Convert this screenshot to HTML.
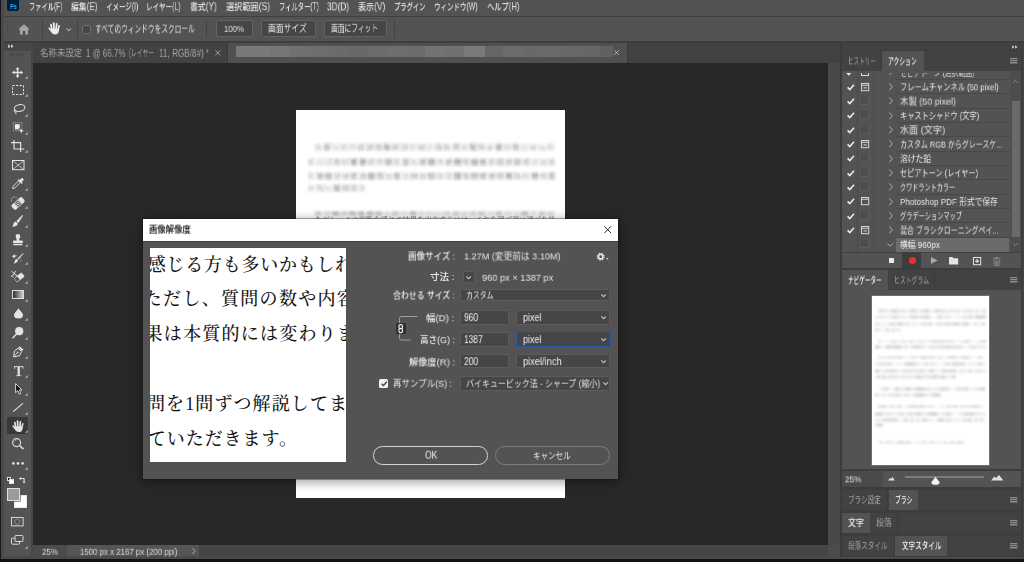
<!DOCTYPE html>
<html lang="ja"><head><meta charset="utf-8"><title>Photoshop - 画像解像度</title>
<style>
html,body{margin:0;padding:0}
body{width:1024px;height:562px;overflow:hidden;background:#282828;position:relative;font-family:"Liberation Sans","Noto Sans CJK JP",sans-serif;color:#dcdcdc;font-size:10px}
body div,body span.t,body svg{position:absolute;box-sizing:border-box}
section{position:absolute;left:0;top:0;width:0;height:0}
.t{white-space:nowrap;transform-origin:0 50%;display:block;will-change:transform}
svg{overflow:visible}
.t i{font-style:normal;font-size:1.05em}
.pv{position:absolute;white-space:nowrap;font-family:"Liberation Serif","Noto Serif CJK SC",serif;font-size:18px;line-height:26px;letter-spacing:1.3px;color:#141414;font-weight:500}
</style></head>
<body>
<section id="window">
<div style="left:0px;top:0px;width:1024px;height:559.3px;background:#4a4a4a;"></div>
<div style="left:0px;top:0px;width:1.1px;height:562px;background:#1a171d;"></div>
<div style="left:0px;top:559.3px;width:1024px;height:2.7px;background:#111111;"></div>
</section>
<section id="menubar">
<div style="left:4px;top:0px;width:1020px;height:15.5px;background:#535353;"></div>
<div style="left:4px;top:15.5px;width:1020px;height:1.5px;background:#3f3f3f;"></div>
<div style="left:7.2px;top:-2px;width:11.6px;height:12.6px;background:#001e36;border-radius:2.5px"></div>
<span class="t" style="left:10.0px;top:0px;font-size:8px;line-height:11px;color:#31a8ff;font-weight:700;transform:translate3d(0,0.96px,0) scaleX(0.7043);">Ps</span>
<span class="t" style="left:28.7px;top:0px;font-size:9.6px;line-height:13px;color:#e6e6e6;font-weight:500;transform:translate3d(0,0.1px,0) scaleX(0.6498);">ファイル<i>(F)</i></span>
<span class="t" style="left:70.9px;top:0px;font-size:9.6px;line-height:13px;color:#e6e6e6;font-weight:500;transform:translate3d(0,0.1px,0) scaleX(0.8153);">編集<i>(E)</i></span>
<span class="t" style="left:105.7px;top:0px;font-size:9.6px;line-height:13px;color:#e6e6e6;font-weight:500;transform:translate3d(0,0.1px,0) scaleX(0.6771);">イメージ<i>(I)</i></span>
<span class="t" style="left:146.4px;top:0px;font-size:9.6px;line-height:13px;color:#e6e6e6;font-weight:500;transform:translate3d(0,0.1px,0) scaleX(0.6862);">レイヤー<i>(L)</i></span>
<span class="t" style="left:190.2px;top:0px;font-size:9.6px;line-height:13px;color:#e6e6e6;font-weight:500;transform:translate3d(0,0.1px,0) scaleX(0.8215);">書式<i>(Y)</i></span>
<span class="t" style="left:225.7px;top:0px;font-size:9.6px;line-height:13px;color:#e6e6e6;font-weight:500;transform:translate3d(0,0.1px,0) scaleX(0.8492);">選択範囲<i>(S)</i></span>
<span class="t" style="left:278.7px;top:0px;font-size:9.6px;line-height:13px;color:#e6e6e6;font-weight:500;transform:translate3d(0,0.1px,0) scaleX(0.6562);">フィルター<i>(T)</i></span>
<span class="t" style="left:327px;top:-1px;font-size:10.5px;line-height:15px;color:#f0f0f0;font-weight:500;transform:translate3d(0,0.33px,0) scaleX(0.7857);">3D(D)</span>
<span class="t" style="left:358.2px;top:0px;font-size:9.6px;line-height:13px;color:#e6e6e6;font-weight:500;transform:translate3d(0,0.1px,0) scaleX(0.8368);">表示<i>(V)</i></span>
<span class="t" style="left:394.4px;top:0px;font-size:9.6px;line-height:13px;color:#e6e6e6;font-weight:500;transform:translate3d(0,0.1px,0) scaleX(0.6588);">プラグイン</span>
<span class="t" style="left:434.4px;top:0px;font-size:9.6px;line-height:13px;color:#e6e6e6;font-weight:500;transform:translate3d(0,0.1px,0) scaleX(0.6791);">ウィンドウ<i>(W)</i></span>
<span class="t" style="left:486.7px;top:0px;font-size:9.6px;line-height:13px;color:#e6e6e6;font-weight:500;transform:translate3d(0,0.1px,0) scaleX(0.7550);">ヘルプ<i>(H)</i></span>
</section>
<section id="optionsbar">
<div style="left:4px;top:17px;width:1020px;height:24px;background:#535353;"></div>
<div style="left:4px;top:41px;width:1020px;height:1.5px;background:#3d3d3d;"></div>
<div style="left:7.3px;top:22px;width:1px;height:14px;background:repeating-linear-gradient(180deg,#474747 0 1px,#535353 1px 1.75px)"></div>
<svg style="left:17.9px;top:23.5px;" width="11.6" height="11" viewBox="0 0 11.6 11"><path d="M6 0.3 L0.2 5.6 H1.9 V10.6 H4.7 V7 H7.3 V10.6 H10.1 V5.6 H11.8 Z" fill="#a3a3a3"/></svg>
<div style="left:41.5px;top:20px;width:1.2px;height:17.5px;background:#434343;"></div>
<svg style="left:47.8px;top:22.3px;" width="12.4" height="12.4" viewBox="-0.2 0 12.6 12.6"><g fill="#ececec"><rect x="2.9" y="1.7" width="1.8" height="7" rx="0.9" transform="rotate(-9 3.8 8.6)"/><rect x="5" y="0.2" width="1.8" height="8.4" rx="0.9" transform="rotate(-2 5.9 8.6)"/><rect x="7.1" y="0.9" width="1.8" height="7.7" rx="0.9" transform="rotate(5 8 8.6)"/><rect x="9" y="2.9" width="1.6" height="6" rx="0.8" transform="rotate(15 9.8 8.9)"/><path d="M2.9 6.9 H10.9 V8.8 C10.9 11.2 9.3 12.6 7 12.6 C5.1 12.6 4.1 11.9 3.1 10.5 L0.4 6.9 C-0.2 6 0.9 5.1 1.6 5.9 L2.9 7.4 Z"/></g></svg>
<svg style="left:65.8px;top:28.1px;" width="5.4" height="3.2" viewBox="0 0 5.4 3.2"><path d="M0.3 0.3 L2.7 2.7 L5.1 0.3" fill="none" stroke="#a8a8a8" stroke-width="1.1"/></svg>
<div style="left:76.6px;top:20px;width:1.2px;height:17.5px;background:#434343;"></div>
<div style="left:82.2px;top:25.3px;width:8.6px;height:8.4px;background:#474747;border:1px solid #727272;border-radius:2.5px"></div>
<span class="t" style="left:95.3px;top:22px;font-size:10px;line-height:14px;color:#e0e0e0;transform:translate3d(0,0.6px,0) scaleX(0.6695);">すべてのウィンドウをスクロール</span>
<div style="left:206px;top:20px;width:1.2px;height:17.5px;background:#434343;"></div>
<div style="left:215.5px;top:20px;width:37.5px;height:17.2px;background:#464646;border:1px solid #626262;border-radius:2px"></div>
<span class="t" style="left:224px;top:22px;font-size:9px;line-height:13px;color:#e0e0e0;transform:translate3d(0,0.93px,0) scaleX(0.8684);">100%</span>
<div style="left:260.5px;top:20px;width:55.0px;height:17.2px;background:#464646;border:1px solid #626262;border-radius:2px"></div>
<span class="t" style="left:268.2px;top:21px;font-size:10px;line-height:14px;color:#e0e0e0;transform:translate3d(0,0.8px,0) scaleX(0.7806);">画面サイズ</span>
<div style="left:323.5px;top:20px;width:63.5px;height:17.2px;background:#464646;border:1px solid #626262;border-radius:2px"></div>
<span class="t" style="left:331.4px;top:21px;font-size:10px;line-height:14px;color:#e0e0e0;transform:translate3d(0,0.8px,0) scaleX(0.6747);">画面にフィット</span>
<div style="left:393.6px;top:20px;width:1.2px;height:17.5px;background:#434343;"></div>
</section>
<section id="doctabs">
<div style="left:33px;top:42.5px;width:807px;height:20.5px;background:#424242;"></div>
<div style="left:226.6px;top:42.5px;width:1.0px;height:20.5px;background:#383838;"></div>
<div style="left:227.6px;top:42.5px;width:399.4px;height:20.5px;background:#505050;"></div>
<div style="left:627px;top:42.5px;width:1px;height:20.5px;background:#3a3a3a;"></div>
<span class="t" style="left:40.3px;top:46px;font-size:9.6px;line-height:13px;color:#a6a6a6;transform:translate3d(0,0.1px,0) scaleX(0.8797);">名称未設定</span>
<span class="t" style="left:86.2px;top:45px;font-size:10.6px;line-height:15px;color:#a6a6a6;transform:translate3d(0,0.84px,0) scaleX(0.7494);">1 @ 66.7%</span>
<span class="t" style="left:128.6px;top:46px;font-size:9.6px;line-height:13px;color:#a6a6a6;transform:translate3d(0,0.1px,0) scaleX(0.6031);"><i>(</i>レイヤー</span>
<span class="t" style="left:158.6px;top:45px;font-size:10.6px;line-height:15px;color:#a6a6a6;transform:translate3d(0,0.84px,0) scaleX(0.7710);">11, RGB/8#)</span>
<span class="t" style="left:206px;top:45px;font-size:10.6px;line-height:15px;color:#a6a6a6;transform:translate3d(0,0.84px,0) scaleX(0.6303);">*</span>
<svg style="left:214.6px;top:50px;" width="5.6" height="5.6" viewBox="0 0 5.6 5.6"><path d="M0.3 0.3 L5.3 5.3 M5.3 0.3 L0.3 5.3" stroke="#a8a8a8" stroke-width="0.9" fill="none"/></svg>
<div style="left:236px;top:46px;width:377px;height:10.5px;background:linear-gradient(90deg,rgb(121,121,121) 0.0px 34.5px,rgb(118,118,118) 34.5px 54.1px,rgb(112,112,112) 54.1px 73.8px,rgb(110,110,110) 73.8px 93.1px,rgb(107,107,107) 93.1px 112.8px,rgb(105,105,105) 112.8px 132.1px,rgb(108,108,108) 132.1px 151.8px,rgb(111,111,111) 151.8px 171.0px,rgb(108,108,108) 171.0px 189.5px,rgb(115,115,115) 189.5px 209.2px,rgb(113,113,113) 209.2px 228.5px,rgb(122,122,122) 228.5px 249.0px,rgb(102,102,102) 249.0px 267.4px,rgb(108,108,108) 267.4px 287.1px,rgb(105,105,105) 287.1px 306.4px,rgb(106,106,106) 306.4px 326.1px,rgb(104,104,104) 326.1px 345.4px,rgb(103,103,103) 345.4px 363.8px,rgb(97,97,97) 363.8px 377.4px)"></div>
<svg style="left:614px;top:50px;" width="5.2" height="5.2" viewBox="0 0 5.2 5.2"><path d="M0.3 0.3 L4.9 4.9 M4.9 0.3 L0.3 4.9" stroke="#bdbdbd" stroke-width="0.9" fill="none"/></svg>
</section>
<section id="canvas">
<div style="left:33px;top:63px;width:795px;height:481.8px;background:#282828;"></div>
<div style="left:828px;top:63px;width:12px;height:481.8px;background:#494949;"></div>
<div style="left:33px;top:544.8px;width:795px;height:11.2px;background:#464646;"></div>
<div style="left:828px;top:544.8px;width:12px;height:11.2px;background:#4c4c4c;"></div>
<div style="left:840px;top:42.5px;width:2px;height:514.5px;background:#3b3b3b;"></div>
<div style="left:31px;top:42.5px;width:2px;height:513.5px;background:#474747;"></div>
<div style="left:33px;top:544.8px;width:33.8px;height:11.2px;background:#4b4b4b;"></div>
<div style="left:66.8px;top:544.8px;width:132.7px;height:11.2px;background:#555555;"></div>
<span class="t" style="left:42px;top:544px;font-size:9.5px;line-height:13px;color:#dedede;transform:translate3d(0,0.76px,0) scaleX(0.8414);">25%</span>
<span class="t" style="left:80px;top:544px;font-size:9.5px;line-height:13px;color:#d8d8d8;transform:translate3d(0,0.76px,0) scaleX(0.8270);">1500 px x 2167 px (200 ppi)</span>
<svg style="left:191.8px;top:547.6px;" width="3.6" height="6.4" viewBox="0 0 3.6 6.4"><path d="M0.4 0.4 L3.1 3.2 L0.4 6" fill="none" stroke="#b8b8b8" stroke-width="0.9"/></svg>
<div style="left:296.0px;top:109.5px;width:269.1px;height:388.6px;background:#ffffff;"></div>
<div style="left:315px;top:142.9px;width:240.4px;height:8px;filter:blur(0.9px);opacity:1.0">
<div style="left:0;top:0.0px;width:100%;height:2.72px;background:linear-gradient(90deg,#ebebeb 0.0px 4.3px,#f0f0f0 4.3px 6.4px,#fafafa 6.4px 8.6px,#dcdcdc 8.6px 10.8px,#d2d2d2 10.8px 12.9px,#dcdcdc 12.9px 15.0px,#f0f0f0 15.0px 17.2px,#e6e6e6 17.2px 19.3px,#f5f5f5 19.3px 21.5px,#f0f0f0 21.5px 23.6px,#f5f5f5 23.6px 25.8px,#e6e6e6 25.8px 27.9px,#f0f0f0 27.9px 30.1px,#e1e1e1 30.1px 32.2px,#f5f5f5 32.2px 34.4px,#ebebeb 34.4px 40.9px,#f5f5f5 40.9px 43.0px,#e1e1e1 43.0px 45.1px,#e6e6e6 45.1px 47.3px,#e1e1e1 47.3px 49.4px,#f0f0f0 49.4px 51.6px,#dcdcdc 51.6px 53.8px,#f0f0f0 53.8px 55.9px,#d2d2d2 55.9px 58.0px,#f0f0f0 58.0px 60.2px,#ebebeb 60.2px 62.3px,#d7d7d7 62.3px 64.5px,#e1e1e1 64.5px 66.6px,#f5f5f5 66.6px 68.8px,#cdcdcd 68.8px 71.0px,#dcdcdc 71.0px 73.1px,#d7d7d7 73.1px 75.2px,#f5f5f5 75.2px 77.4px,#e6e6e6 77.4px 83.8px,#f0f0f0 83.8px 86.0px,#ebebeb 86.0px 88.1px,#e1e1e1 88.1px 90.3px,#e6e6e6 90.3px 92.5px,#f0f0f0 92.5px 94.6px,#e6e6e6 94.6px 96.8px,#ebebeb 96.8px 101.0px,#f5f5f5 101.0px 103.2px,#e6e6e6 103.2px 105.3px,#f0f0f0 105.3px 107.5px,#dcdcdc 107.5px 109.6px,#f0f0f0 109.6px 111.8px,#f5f5f5 111.8px 113.9px,#e6e6e6 113.9px 116.1px,#fafafa 116.1px 118.2px,#f0f0f0 118.2px 120.4px,#e1e1e1 120.4px 122.5px,#dcdcdc 122.5px 124.7px,#ebebeb 124.7px 126.8px,#f5f5f5 126.8px 129.0px,#e1e1e1 129.0px 131.2px,#ebebeb 131.2px 135.4px,#fafafa 135.4px 137.6px,#d7d7d7 137.6px 139.8px,#dcdcdc 139.8px 141.9px,#cdcdcd 141.9px 144.0px,#f0f0f0 144.0px 146.2px,#f5f5f5 146.2px 148.3px,#ebebeb 148.3px 150.5px,#f0f0f0 150.5px 154.8px,#cdcdcd 154.8px 156.9px,#dcdcdc 156.9px 159.1px,#d7d7d7 159.1px 161.2px,#f0f0f0 161.2px 163.4px,#e1e1e1 163.4px 165.5px,#e6e6e6 165.5px 169.8px,#f0f0f0 169.8px 172.0px,#f5f5f5 172.0px 174.2px,#ebebeb 174.2px 176.3px,#f0f0f0 176.3px 180.6px,#d7d7d7 180.6px 182.8px,#d2d2d2 182.8px 184.9px,#d7d7d7 184.9px 187.0px,#f0f0f0 187.0px 189.2px,#ebebeb 189.2px 195.7px,#f0f0f0 195.7px 197.8px,#d2d2d2 197.8px 199.9px,#d7d7d7 199.9px 202.1px,#e6e6e6 202.1px 204.2px,#f5f5f5 204.2px 206.4px,#ebebeb 206.4px 208.5px,#f5f5f5 208.5px 210.7px,#f0f0f0 210.7px 212.8px,#f5f5f5 212.8px 215.0px,#f0f0f0 215.0px 217.1px,#f5f5f5 217.1px 219.3px,#e6e6e6 219.3px 221.4px,#f5f5f5 221.4px 223.6px,#f0f0f0 223.6px 225.8px,#f5f5f5 225.8px 227.9px,#fafafa 227.9px 230.0px,#f0f0f0 230.0px 234.3px,#e1e1e1 234.3px 236.5px,#f5f5f5 236.5px 240.8px)"></div>
<div style="left:0;top:2.67px;width:100%;height:2.72px;background:linear-gradient(90deg,#d7d7d7 0.0px 2.1px,#d2d2d2 2.1px 4.3px,#d7d7d7 4.3px 6.4px,#f0f0f0 6.4px 8.6px,#b9b9b9 8.6px 10.8px,#bebebe 10.8px 15.0px,#f0f0f0 15.0px 17.2px,#e1e1e1 17.2px 23.6px,#f5f5f5 23.6px 25.8px,#d2d2d2 25.8px 27.9px,#d7d7d7 27.9px 30.1px,#dcdcdc 30.1px 32.2px,#f5f5f5 32.2px 34.4px,#e6e6e6 34.4px 36.5px,#d7d7d7 36.5px 38.7px,#e1e1e1 38.7px 40.9px,#f0f0f0 40.9px 43.0px,#cdcdcd 43.0px 45.1px,#d2d2d2 45.1px 47.3px,#c3c3c3 47.3px 49.4px,#f5f5f5 49.4px 51.6px,#cdcdcd 51.6px 55.9px,#bebebe 55.9px 58.0px,#f0f0f0 58.0px 60.2px,#c8c8c8 60.2px 62.3px,#d2d2d2 62.3px 64.5px,#c8c8c8 64.5px 66.6px,#f5f5f5 66.6px 68.8px,#afafaf 68.8px 73.1px,#b4b4b4 73.1px 75.2px,#f5f5f5 75.2px 77.4px,#c3c3c3 77.4px 79.5px,#c8c8c8 79.5px 83.8px,#f5f5f5 83.8px 86.0px,#dcdcdc 86.0px 90.3px,#cdcdcd 90.3px 92.5px,#f5f5f5 92.5px 94.6px,#d7d7d7 94.6px 96.8px,#e1e1e1 96.8px 98.9px,#d7d7d7 98.9px 101.0px,#f5f5f5 101.0px 103.2px,#cdcdcd 103.2px 107.5px,#c8c8c8 107.5px 109.6px,#f0f0f0 109.6px 111.8px,#e6e6e6 111.8px 113.9px,#e1e1e1 113.9px 116.1px,#e6e6e6 116.1px 118.2px,#f5f5f5 118.2px 120.4px,#d7d7d7 120.4px 122.5px,#c8c8c8 122.5px 126.8px,#f0f0f0 126.8px 129.0px,#c8c8c8 129.0px 133.3px,#d2d2d2 133.3px 135.4px,#fafafa 135.4px 137.6px,#c3c3c3 137.6px 141.9px,#c8c8c8 141.9px 144.0px,#f5f5f5 144.0px 146.2px,#dcdcdc 146.2px 148.3px,#d7d7d7 148.3px 150.5px,#dcdcdc 150.5px 152.7px,#f5f5f5 152.7px 154.8px,#afafaf 154.8px 156.9px,#b9b9b9 156.9px 159.1px,#bebebe 159.1px 161.2px,#f5f5f5 161.2px 163.4px,#cdcdcd 163.4px 165.5px,#c8c8c8 165.5px 167.7px,#d2d2d2 167.7px 169.8px,#f5f5f5 169.8px 172.0px,#d7d7d7 172.0px 174.2px,#c8c8c8 174.2px 176.3px,#d7d7d7 176.3px 178.4px,#f0f0f0 178.4px 180.6px,#b4b4b4 180.6px 182.8px,#aaaaaa 182.8px 184.9px,#b4b4b4 184.9px 187.0px,#fafafa 187.0px 189.2px,#cdcdcd 189.2px 191.3px,#e1e1e1 191.3px 193.5px,#dcdcdc 193.5px 195.7px,#f5f5f5 195.7px 197.8px,#b9b9b9 197.8px 199.9px,#bebebe 199.9px 204.2px,#f5f5f5 204.2px 206.4px,#ebebeb 206.4px 208.5px,#e1e1e1 208.5px 210.7px,#e6e6e6 210.7px 212.8px,#f0f0f0 212.8px 215.0px,#d7d7d7 215.0px 217.1px,#d2d2d2 217.1px 219.3px,#d7d7d7 219.3px 221.4px,#f5f5f5 221.4px 223.6px,#dcdcdc 223.6px 225.8px,#e1e1e1 225.8px 230.0px,#fafafa 230.0px 232.2px,#d7d7d7 232.2px 234.3px,#dcdcdc 234.3px 236.5px,#e1e1e1 236.5px 238.6px,#f5f5f5 238.6px 240.8px)"></div>
<div style="left:0;top:5.33px;width:100%;height:2.72px;background:linear-gradient(90deg,#e6e6e6 0.0px 2.1px,#ebebeb 2.1px 4.3px,#e6e6e6 4.3px 6.4px,#f5f5f5 6.4px 8.6px,#d7d7d7 8.6px 10.8px,#d2d2d2 10.8px 12.9px,#d7d7d7 12.9px 15.0px,#fafafa 15.0px 17.2px,#ebebeb 17.2px 23.6px,#f5f5f5 23.6px 25.8px,#e1e1e1 25.8px 27.9px,#ebebeb 27.9px 30.1px,#e6e6e6 30.1px 32.2px,#f0f0f0 32.2px 34.4px,#ebebeb 34.4px 36.5px,#f5f5f5 36.5px 38.7px,#e6e6e6 38.7px 40.9px,#f5f5f5 40.9px 43.0px,#d7d7d7 43.0px 45.1px,#dcdcdc 45.1px 49.4px,#f0f0f0 49.4px 51.6px,#d2d2d2 51.6px 53.8px,#e1e1e1 53.8px 55.9px,#e6e6e6 55.9px 58.0px,#f0f0f0 58.0px 60.2px,#e6e6e6 60.2px 62.3px,#dcdcdc 62.3px 66.6px,#f5f5f5 66.6px 68.8px,#d2d2d2 68.8px 71.0px,#cdcdcd 71.0px 75.2px,#f0f0f0 75.2px 77.4px,#dcdcdc 77.4px 79.5px,#e1e1e1 79.5px 81.7px,#e6e6e6 81.7px 83.8px,#f0f0f0 83.8px 86.0px,#ebebeb 86.0px 88.1px,#dcdcdc 88.1px 90.3px,#e1e1e1 90.3px 92.5px,#fafafa 92.5px 94.6px,#e1e1e1 94.6px 96.8px,#ebebeb 96.8px 98.9px,#f0f0f0 98.9px 101.0px,#f5f5f5 101.0px 103.2px,#e1e1e1 103.2px 105.3px,#dcdcdc 105.3px 107.5px,#e1e1e1 107.5px 109.6px,#f0f0f0 109.6px 111.8px,#ebebeb 111.8px 116.1px,#f0f0f0 116.1px 118.2px,#f5f5f5 118.2px 120.4px,#e1e1e1 120.4px 122.5px,#dcdcdc 122.5px 124.7px,#d2d2d2 124.7px 126.8px,#fafafa 126.8px 129.0px,#d7d7d7 129.0px 131.2px,#e6e6e6 131.2px 133.3px,#e1e1e1 133.3px 135.4px,#f0f0f0 135.4px 137.6px,#e1e1e1 137.6px 139.8px,#e6e6e6 139.8px 141.9px,#d7d7d7 141.9px 144.0px,#f5f5f5 144.0px 146.2px,#ebebeb 146.2px 148.3px,#e6e6e6 148.3px 150.5px,#ebebeb 150.5px 152.7px,#fafafa 152.7px 154.8px,#dcdcdc 154.8px 156.9px,#c8c8c8 156.9px 159.1px,#cdcdcd 159.1px 161.2px,#f0f0f0 161.2px 163.4px,#e6e6e6 163.4px 167.7px,#dcdcdc 167.7px 169.8px,#f5f5f5 169.8px 172.0px,#e1e1e1 172.0px 174.2px,#dcdcdc 174.2px 176.3px,#e6e6e6 176.3px 178.4px,#fafafa 178.4px 180.6px,#c8c8c8 180.6px 182.8px,#cdcdcd 182.8px 187.0px,#f5f5f5 187.0px 189.2px,#e6e6e6 189.2px 191.3px,#ebebeb 191.3px 193.5px,#e6e6e6 193.5px 195.7px,#f5f5f5 195.7px 197.8px,#e1e1e1 197.8px 199.9px,#d7d7d7 199.9px 204.2px,#f5f5f5 204.2px 206.4px,#e6e6e6 206.4px 208.5px,#ebebeb 208.5px 212.8px,#fafafa 212.8px 215.0px,#e1e1e1 215.0px 217.1px,#e6e6e6 217.1px 219.3px,#dcdcdc 219.3px 221.4px,#f5f5f5 221.4px 223.6px,#e1e1e1 223.6px 225.8px,#f0f0f0 225.8px 227.9px,#d7d7d7 227.9px 230.0px,#f0f0f0 230.0px 232.2px,#ebebeb 232.2px 238.6px,#f0f0f0 238.6px 240.8px)"></div>
</div>
<div style="left:308.4px;top:157.5px;width:246.6px;height:8px;filter:blur(0.9px);opacity:1.0">
<div style="left:0;top:0.0px;width:100%;height:2.72px;background:linear-gradient(90deg,#fafafa 0.0px 2.1px,#e6e6e6 2.1px 4.3px,#e1e1e1 4.3px 6.4px,#f5f5f5 6.4px 8.6px,#f0f0f0 8.6px 15.0px,#f5f5f5 15.0px 17.2px,#ebebeb 17.2px 19.3px,#f5f5f5 19.3px 21.5px,#dcdcdc 21.5px 23.6px,#f0f0f0 23.6px 25.8px,#e6e6e6 25.8px 27.9px,#d7d7d7 27.9px 30.1px,#e6e6e6 30.1px 32.2px,#f5f5f5 32.2px 34.4px,#e1e1e1 34.4px 36.5px,#f5f5f5 36.5px 38.7px,#dcdcdc 38.7px 40.9px,#f0f0f0 40.9px 43.0px,#d7d7d7 43.0px 45.1px,#d2d2d2 45.1px 47.3px,#cdcdcd 47.3px 49.4px,#f5f5f5 49.4px 51.6px,#c8c8c8 51.6px 53.8px,#d2d2d2 53.8px 58.0px,#f5f5f5 58.0px 60.2px,#e1e1e1 60.2px 62.3px,#e6e6e6 62.3px 64.5px,#e1e1e1 64.5px 66.6px,#f5f5f5 66.6px 68.8px,#f0f0f0 68.8px 71.0px,#e1e1e1 71.0px 73.1px,#ebebeb 73.1px 75.2px,#f0f0f0 75.2px 77.4px,#d7d7d7 77.4px 81.7px,#dcdcdc 81.7px 83.8px,#f0f0f0 83.8px 86.0px,#e1e1e1 86.0px 88.1px,#e6e6e6 88.1px 92.5px,#f5f5f5 92.5px 94.6px,#d7d7d7 94.6px 98.9px,#e1e1e1 98.9px 101.0px,#f0f0f0 101.0px 103.2px,#ebebeb 103.2px 105.3px,#f0f0f0 105.3px 107.5px,#f5f5f5 107.5px 111.8px,#e1e1e1 111.8px 116.1px,#dcdcdc 116.1px 118.2px,#ebebeb 118.2px 120.4px,#d2d2d2 120.4px 126.8px,#f5f5f5 126.8px 129.0px,#ebebeb 129.0px 131.2px,#f0f0f0 131.2px 133.3px,#e6e6e6 133.3px 135.4px,#f5f5f5 135.4px 137.6px,#e1e1e1 137.6px 144.0px,#fafafa 144.0px 146.2px,#d7d7d7 146.2px 148.3px,#d2d2d2 148.3px 150.5px,#d7d7d7 150.5px 152.7px,#f0f0f0 152.7px 154.8px,#e1e1e1 154.8px 159.1px,#d7d7d7 159.1px 161.2px,#f5f5f5 161.2px 163.4px,#e1e1e1 163.4px 167.7px,#d2d2d2 167.7px 169.8px,#f0f0f0 169.8px 172.0px,#dcdcdc 172.0px 174.2px,#e1e1e1 174.2px 176.3px,#d7d7d7 176.3px 178.4px,#f5f5f5 178.4px 180.6px,#e6e6e6 180.6px 184.9px,#ebebeb 184.9px 187.0px,#f0f0f0 187.0px 189.2px,#dcdcdc 189.2px 193.5px,#d7d7d7 193.5px 195.7px,#fafafa 195.7px 197.8px,#e1e1e1 197.8px 199.9px,#e6e6e6 199.9px 202.1px,#e1e1e1 202.1px 204.2px,#f0f0f0 204.2px 206.4px,#d7d7d7 206.4px 208.5px,#e6e6e6 208.5px 210.7px,#d7d7d7 210.7px 212.8px,#fafafa 212.8px 215.0px,#e6e6e6 215.0px 217.1px,#e1e1e1 217.1px 219.3px,#d7d7d7 219.3px 221.4px,#f0f0f0 221.4px 227.9px,#ebebeb 227.9px 230.0px,#fafafa 230.0px 232.2px,#ebebeb 232.2px 234.3px,#f0f0f0 234.3px 240.8px,#ebebeb 240.8px 242.9px,#e6e6e6 242.9px 247.2px)"></div>
<div style="left:0;top:2.67px;width:100%;height:2.72px;background:linear-gradient(90deg,#d7d7d7 0.0px 2.1px,#dcdcdc 2.1px 4.3px,#e6e6e6 4.3px 6.4px,#fafafa 6.4px 8.6px,#e1e1e1 8.6px 10.8px,#e6e6e6 10.8px 12.9px,#e1e1e1 12.9px 15.0px,#f5f5f5 15.0px 17.2px,#e1e1e1 17.2px 19.3px,#ebebeb 19.3px 21.5px,#e1e1e1 21.5px 23.6px,#f5f5f5 23.6px 25.8px,#d2d2d2 25.8px 27.9px,#cdcdcd 27.9px 32.2px,#f0f0f0 32.2px 34.4px,#d2d2d2 34.4px 36.5px,#dcdcdc 36.5px 38.7px,#e6e6e6 38.7px 40.9px,#f5f5f5 40.9px 43.0px,#aaaaaa 43.0px 45.1px,#afafaf 45.1px 47.3px,#b9b9b9 47.3px 49.4px,#f5f5f5 49.4px 51.6px,#afafaf 51.6px 53.8px,#b4b4b4 53.8px 58.0px,#f5f5f5 58.0px 60.2px,#cdcdcd 60.2px 62.3px,#dcdcdc 62.3px 64.5px,#d7d7d7 64.5px 66.6px,#f5f5f5 66.6px 68.8px,#cdcdcd 68.8px 71.0px,#d7d7d7 71.0px 75.2px,#f0f0f0 75.2px 77.4px,#c3c3c3 77.4px 79.5px,#bebebe 79.5px 83.8px,#f5f5f5 83.8px 86.0px,#d2d2d2 86.0px 88.1px,#dcdcdc 88.1px 92.5px,#fafafa 92.5px 94.6px,#c3c3c3 94.6px 96.8px,#c8c8c8 96.8px 101.0px,#f5f5f5 101.0px 103.2px,#dcdcdc 103.2px 105.3px,#d7d7d7 105.3px 107.5px,#ebebeb 107.5px 109.6px,#f5f5f5 109.6px 111.8px,#bebebe 111.8px 118.2px,#f5f5f5 118.2px 120.4px,#b9b9b9 120.4px 122.5px,#b4b4b4 122.5px 126.8px,#f0f0f0 126.8px 129.0px,#dcdcdc 129.0px 131.2px,#d7d7d7 131.2px 135.4px,#f5f5f5 135.4px 137.6px,#c3c3c3 137.6px 139.8px,#cdcdcd 139.8px 141.9px,#c3c3c3 141.9px 144.0px,#f5f5f5 144.0px 146.2px,#afafaf 146.2px 148.3px,#b4b4b4 148.3px 150.5px,#afafaf 150.5px 152.7px,#f0f0f0 152.7px 154.8px,#c3c3c3 154.8px 156.9px,#d2d2d2 156.9px 161.2px,#f5f5f5 161.2px 163.4px,#b9b9b9 163.4px 169.8px,#f5f5f5 169.8px 172.0px,#b4b4b4 172.0px 174.2px,#bebebe 174.2px 176.3px,#b9b9b9 176.3px 178.4px,#f5f5f5 178.4px 180.6px,#cdcdcd 180.6px 182.8px,#d7d7d7 182.8px 187.0px,#f5f5f5 187.0px 189.2px,#c8c8c8 189.2px 191.3px,#cdcdcd 191.3px 193.5px,#d2d2d2 193.5px 195.7px,#f5f5f5 195.7px 197.8px,#c8c8c8 197.8px 199.9px,#cdcdcd 199.9px 202.1px,#c8c8c8 202.1px 204.2px,#f5f5f5 204.2px 206.4px,#cdcdcd 206.4px 208.5px,#c3c3c3 208.5px 210.7px,#cdcdcd 210.7px 212.8px,#f5f5f5 212.8px 215.0px,#d2d2d2 215.0px 217.1px,#cdcdcd 217.1px 219.3px,#d2d2d2 219.3px 221.4px,#f0f0f0 221.4px 223.6px,#e6e6e6 223.6px 225.8px,#dcdcdc 225.8px 227.9px,#e1e1e1 227.9px 230.0px,#f5f5f5 230.0px 232.2px,#e1e1e1 232.2px 234.3px,#d7d7d7 234.3px 236.5px,#dcdcdc 236.5px 238.6px,#f0f0f0 238.6px 240.8px,#d2d2d2 240.8px 242.9px,#d7d7d7 242.9px 245.1px,#d2d2d2 245.1px 247.2px)"></div>
<div style="left:0;top:5.33px;width:100%;height:2.72px;background:linear-gradient(90deg,#f0f0f0 0.0px 2.1px,#e1e1e1 2.1px 4.3px,#e6e6e6 4.3px 6.4px,#f5f5f5 6.4px 8.6px,#e6e6e6 8.6px 10.8px,#f5f5f5 10.8px 12.9px,#e1e1e1 12.9px 15.0px,#f5f5f5 15.0px 17.2px,#f0f0f0 17.2px 19.3px,#e6e6e6 19.3px 21.5px,#ebebeb 21.5px 23.6px,#f0f0f0 23.6px 25.8px,#e6e6e6 25.8px 27.9px,#dcdcdc 27.9px 30.1px,#e1e1e1 30.1px 32.2px,#fafafa 32.2px 34.4px,#e1e1e1 34.4px 36.5px,#ebebeb 36.5px 38.7px,#e6e6e6 38.7px 40.9px,#f5f5f5 40.9px 43.0px,#cdcdcd 43.0px 45.1px,#c8c8c8 45.1px 47.3px,#d2d2d2 47.3px 49.4px,#f5f5f5 49.4px 51.6px,#c8c8c8 51.6px 53.8px,#d2d2d2 53.8px 58.0px,#fafafa 58.0px 60.2px,#e1e1e1 60.2px 62.3px,#dcdcdc 62.3px 64.5px,#ebebeb 64.5px 66.6px,#f5f5f5 66.6px 68.8px,#ebebeb 68.8px 71.0px,#e6e6e6 71.0px 73.1px,#f0f0f0 73.1px 77.4px,#dcdcdc 77.4px 79.5px,#c8c8c8 79.5px 81.7px,#dcdcdc 81.7px 83.8px,#f0f0f0 83.8px 86.0px,#e6e6e6 86.0px 88.1px,#d7d7d7 88.1px 90.3px,#ebebeb 90.3px 92.5px,#f0f0f0 92.5px 94.6px,#cdcdcd 94.6px 96.8px,#d7d7d7 96.8px 101.0px,#f5f5f5 101.0px 103.2px,#e6e6e6 103.2px 109.6px,#f5f5f5 109.6px 111.8px,#d7d7d7 111.8px 113.9px,#dcdcdc 113.9px 116.1px,#d2d2d2 116.1px 118.2px,#fafafa 118.2px 120.4px,#cdcdcd 120.4px 126.8px,#f5f5f5 126.8px 129.0px,#ebebeb 129.0px 131.2px,#e6e6e6 131.2px 133.3px,#ebebeb 133.3px 135.4px,#f5f5f5 135.4px 137.6px,#d7d7d7 137.6px 141.9px,#e6e6e6 141.9px 144.0px,#f5f5f5 144.0px 146.2px,#d7d7d7 146.2px 148.3px,#d2d2d2 148.3px 150.5px,#cdcdcd 150.5px 152.7px,#f5f5f5 152.7px 154.8px,#ebebeb 154.8px 156.9px,#e1e1e1 156.9px 159.1px,#d7d7d7 159.1px 161.2px,#f5f5f5 161.2px 163.4px,#d2d2d2 163.4px 165.5px,#c8c8c8 165.5px 169.8px,#f0f0f0 169.8px 172.0px,#d2d2d2 172.0px 174.2px,#dcdcdc 174.2px 176.3px,#d2d2d2 176.3px 178.4px,#f5f5f5 178.4px 180.6px,#dcdcdc 180.6px 182.8px,#ebebeb 182.8px 187.0px,#f5f5f5 187.0px 189.2px,#d7d7d7 189.2px 191.3px,#dcdcdc 191.3px 195.7px,#f5f5f5 195.7px 197.8px,#d2d2d2 197.8px 199.9px,#e1e1e1 199.9px 204.2px,#f5f5f5 204.2px 206.4px,#d2d2d2 206.4px 208.5px,#d7d7d7 208.5px 210.7px,#dcdcdc 210.7px 212.8px,#f5f5f5 212.8px 215.0px,#ebebeb 215.0px 217.1px,#dcdcdc 217.1px 221.4px,#f0f0f0 221.4px 223.6px,#e1e1e1 223.6px 225.8px,#f0f0f0 225.8px 227.9px,#e6e6e6 227.9px 230.0px,#fafafa 230.0px 232.2px,#e6e6e6 232.2px 234.3px,#e1e1e1 234.3px 236.5px,#e6e6e6 236.5px 238.6px,#f5f5f5 238.6px 240.8px,#dcdcdc 240.8px 242.9px,#e1e1e1 242.9px 245.1px,#e6e6e6 245.1px 247.2px)"></div>
</div>
<div style="left:308.4px;top:171.6px;width:246.6px;height:8px;filter:blur(0.9px);opacity:1.0">
<div style="left:0;top:0.0px;width:100%;height:2.72px;background:linear-gradient(90deg,#ebebeb 0.0px 2.1px,#e1e1e1 2.1px 4.3px,#f5f5f5 4.3px 6.4px,#f0f0f0 6.4px 8.6px,#d7d7d7 8.6px 10.8px,#e6e6e6 10.8px 12.9px,#dcdcdc 12.9px 15.0px,#f5f5f5 15.0px 17.2px,#e1e1e1 17.2px 19.3px,#d7d7d7 19.3px 21.5px,#e1e1e1 21.5px 23.6px,#f5f5f5 23.6px 25.8px,#e6e6e6 25.8px 27.9px,#f5f5f5 27.9px 30.1px,#e6e6e6 30.1px 32.2px,#f5f5f5 32.2px 34.4px,#ebebeb 34.4px 36.5px,#f5f5f5 36.5px 38.7px,#e1e1e1 38.7px 40.9px,#f0f0f0 40.9px 43.0px,#e1e1e1 43.0px 45.1px,#d7d7d7 45.1px 47.3px,#e1e1e1 47.3px 49.4px,#f0f0f0 49.4px 51.6px,#ebebeb 51.6px 53.8px,#dcdcdc 53.8px 55.9px,#ebebeb 55.9px 58.0px,#fafafa 58.0px 60.2px,#d2d2d2 60.2px 62.3px,#d7d7d7 62.3px 64.5px,#dcdcdc 64.5px 66.6px,#f0f0f0 66.6px 68.8px,#d2d2d2 68.8px 71.0px,#d7d7d7 71.0px 73.1px,#dcdcdc 73.1px 75.2px,#f0f0f0 75.2px 77.4px,#ebebeb 77.4px 79.5px,#fafafa 79.5px 81.7px,#f0f0f0 81.7px 83.8px,#f5f5f5 83.8px 86.0px,#dcdcdc 86.0px 88.1px,#d7d7d7 88.1px 90.3px,#dcdcdc 90.3px 92.5px,#f5f5f5 92.5px 94.6px,#e1e1e1 94.6px 96.8px,#f5f5f5 96.8px 98.9px,#f0f0f0 98.9px 101.0px,#f5f5f5 101.0px 103.2px,#dcdcdc 103.2px 105.3px,#ebebeb 105.3px 109.6px,#f5f5f5 109.6px 111.8px,#e6e6e6 111.8px 113.9px,#ebebeb 113.9px 118.2px,#f5f5f5 118.2px 120.4px,#d7d7d7 120.4px 122.5px,#e1e1e1 122.5px 124.7px,#dcdcdc 124.7px 126.8px,#f5f5f5 126.8px 129.0px,#e6e6e6 129.0px 131.2px,#f5f5f5 131.2px 133.3px,#e6e6e6 133.3px 135.4px,#f5f5f5 135.4px 137.6px,#e1e1e1 137.6px 139.8px,#ebebeb 139.8px 141.9px,#e6e6e6 141.9px 144.0px,#f0f0f0 144.0px 146.2px,#c8c8c8 146.2px 148.3px,#cdcdcd 148.3px 150.5px,#d2d2d2 150.5px 152.7px,#f0f0f0 152.7px 154.8px,#dcdcdc 154.8px 156.9px,#f0f0f0 156.9px 159.1px,#dcdcdc 159.1px 161.2px,#f5f5f5 161.2px 163.4px,#dcdcdc 163.4px 169.8px,#f0f0f0 169.8px 172.0px,#e1e1e1 172.0px 176.3px,#d2d2d2 176.3px 178.4px,#f0f0f0 178.4px 180.6px,#ebebeb 180.6px 182.8px,#e1e1e1 182.8px 187.0px,#f5f5f5 187.0px 189.2px,#e6e6e6 189.2px 191.3px,#e1e1e1 191.3px 193.5px,#dcdcdc 193.5px 195.7px,#f0f0f0 195.7px 197.8px,#d7d7d7 197.8px 199.9px,#d2d2d2 199.9px 202.1px,#d7d7d7 202.1px 204.2px,#f0f0f0 204.2px 206.4px,#e1e1e1 206.4px 208.5px,#f0f0f0 208.5px 212.8px,#f5f5f5 212.8px 215.0px,#e6e6e6 215.0px 217.1px,#ebebeb 217.1px 219.3px,#f5f5f5 219.3px 223.6px,#cdcdcd 223.6px 225.8px,#d7d7d7 225.8px 230.0px,#f0f0f0 230.0px 232.2px,#f5f5f5 232.2px 234.3px,#e1e1e1 234.3px 236.5px,#f0f0f0 236.5px 238.6px,#f5f5f5 238.6px 240.8px,#d2d2d2 240.8px 245.1px,#d7d7d7 245.1px 247.2px)"></div>
<div style="left:0;top:2.67px;width:100%;height:2.72px;background:linear-gradient(90deg,#dcdcdc 0.0px 2.1px,#e1e1e1 2.1px 6.4px,#fafafa 6.4px 8.6px,#c3c3c3 8.6px 10.8px,#bebebe 10.8px 15.0px,#f0f0f0 15.0px 17.2px,#b9b9b9 17.2px 19.3px,#bebebe 19.3px 21.5px,#c3c3c3 21.5px 23.6px,#fafafa 23.6px 25.8px,#d7d7d7 25.8px 27.9px,#e1e1e1 27.9px 30.1px,#d2d2d2 30.1px 32.2px,#f0f0f0 32.2px 34.4px,#dcdcdc 34.4px 36.5px,#d2d2d2 36.5px 40.9px,#f0f0f0 40.9px 43.0px,#c8c8c8 43.0px 45.1px,#c3c3c3 45.1px 47.3px,#cdcdcd 47.3px 49.4px,#f5f5f5 49.4px 51.6px,#d7d7d7 51.6px 53.8px,#d2d2d2 53.8px 55.9px,#c3c3c3 55.9px 58.0px,#f5f5f5 58.0px 60.2px,#afafaf 60.2px 62.3px,#b9b9b9 62.3px 66.6px,#f0f0f0 66.6px 68.8px,#cdcdcd 68.8px 73.1px,#c3c3c3 73.1px 75.2px,#ebebeb 75.2px 79.5px,#d7d7d7 79.5px 81.7px,#e1e1e1 81.7px 83.8px,#f5f5f5 83.8px 86.0px,#bebebe 86.0px 90.3px,#c8c8c8 90.3px 92.5px,#f5f5f5 92.5px 94.6px,#e6e6e6 94.6px 96.8px,#dcdcdc 96.8px 101.0px,#f5f5f5 101.0px 103.2px,#c8c8c8 103.2px 105.3px,#cdcdcd 105.3px 107.5px,#c8c8c8 107.5px 109.6px,#f5f5f5 109.6px 111.8px,#d7d7d7 111.8px 113.9px,#d2d2d2 113.9px 116.1px,#d7d7d7 116.1px 118.2px,#f5f5f5 118.2px 120.4px,#b9b9b9 120.4px 122.5px,#c8c8c8 122.5px 124.7px,#c3c3c3 124.7px 126.8px,#f5f5f5 126.8px 129.0px,#d7d7d7 129.0px 131.2px,#dcdcdc 131.2px 133.3px,#d2d2d2 133.3px 135.4px,#f0f0f0 135.4px 137.6px,#dcdcdc 137.6px 144.0px,#f5f5f5 144.0px 146.2px,#c3c3c3 146.2px 148.3px,#b9b9b9 148.3px 150.5px,#b4b4b4 150.5px 152.7px,#f0f0f0 152.7px 154.8px,#cdcdcd 154.8px 156.9px,#c8c8c8 156.9px 159.1px,#d2d2d2 159.1px 161.2px,#f0f0f0 161.2px 163.4px,#bebebe 163.4px 165.5px,#c3c3c3 165.5px 167.7px,#bebebe 167.7px 169.8px,#f0f0f0 169.8px 172.0px,#bebebe 172.0px 176.3px,#c3c3c3 176.3px 178.4px,#f5f5f5 178.4px 180.6px,#c3c3c3 180.6px 187.0px,#f0f0f0 187.0px 189.2px,#c8c8c8 189.2px 193.5px,#d2d2d2 193.5px 195.7px,#f0f0f0 195.7px 197.8px,#afafaf 197.8px 202.1px,#b4b4b4 202.1px 204.2px,#f5f5f5 204.2px 206.4px,#d7d7d7 206.4px 208.5px,#d2d2d2 208.5px 210.7px,#dcdcdc 210.7px 212.8px,#f0f0f0 212.8px 215.0px,#d2d2d2 215.0px 217.1px,#e1e1e1 217.1px 219.3px,#dcdcdc 219.3px 221.4px,#f0f0f0 221.4px 223.6px,#b4b4b4 223.6px 225.8px,#b9b9b9 225.8px 227.9px,#aaaaaa 227.9px 230.0px,#f0f0f0 230.0px 232.2px,#d7d7d7 232.2px 234.3px,#d2d2d2 234.3px 236.5px,#d7d7d7 236.5px 238.6px,#f5f5f5 238.6px 240.8px,#c3c3c3 240.8px 242.9px,#c8c8c8 242.9px 247.2px)"></div>
<div style="left:0;top:5.33px;width:100%;height:2.72px;background:linear-gradient(90deg,#e6e6e6 0.0px 4.3px,#f0f0f0 4.3px 6.4px,#f5f5f5 6.4px 8.6px,#d7d7d7 8.6px 15.0px,#f0f0f0 15.0px 17.2px,#e1e1e1 17.2px 19.3px,#cdcdcd 19.3px 23.6px,#fafafa 23.6px 25.8px,#e6e6e6 25.8px 27.9px,#dcdcdc 27.9px 30.1px,#e6e6e6 30.1px 32.2px,#f5f5f5 32.2px 34.4px,#e6e6e6 34.4px 36.5px,#e1e1e1 36.5px 40.9px,#f5f5f5 40.9px 43.0px,#d2d2d2 43.0px 45.1px,#d7d7d7 45.1px 47.3px,#dcdcdc 47.3px 49.4px,#f0f0f0 49.4px 51.6px,#d7d7d7 51.6px 53.8px,#e1e1e1 53.8px 55.9px,#d7d7d7 55.9px 58.0px,#f0f0f0 58.0px 60.2px,#d2d2d2 60.2px 62.3px,#bebebe 62.3px 64.5px,#cdcdcd 64.5px 66.6px,#f5f5f5 66.6px 68.8px,#dcdcdc 68.8px 71.0px,#e1e1e1 71.0px 73.1px,#d7d7d7 73.1px 75.2px,#f0f0f0 75.2px 77.4px,#ebebeb 77.4px 79.5px,#e1e1e1 79.5px 83.8px,#f5f5f5 83.8px 86.0px,#d7d7d7 86.0px 88.1px,#c8c8c8 88.1px 90.3px,#d2d2d2 90.3px 92.5px,#f5f5f5 92.5px 94.6px,#e6e6e6 94.6px 96.8px,#ebebeb 96.8px 101.0px,#f0f0f0 101.0px 103.2px,#e1e1e1 103.2px 105.3px,#e6e6e6 105.3px 107.5px,#e1e1e1 107.5px 109.6px,#f5f5f5 109.6px 111.8px,#dcdcdc 111.8px 113.9px,#e6e6e6 113.9px 116.1px,#dcdcdc 116.1px 118.2px,#f5f5f5 118.2px 120.4px,#dcdcdc 120.4px 122.5px,#d7d7d7 122.5px 126.8px,#f0f0f0 126.8px 129.0px,#ebebeb 129.0px 131.2px,#e6e6e6 131.2px 133.3px,#e1e1e1 133.3px 135.4px,#f5f5f5 135.4px 137.6px,#e1e1e1 137.6px 141.9px,#ebebeb 141.9px 144.0px,#f0f0f0 144.0px 146.2px,#cdcdcd 146.2px 150.5px,#c3c3c3 150.5px 152.7px,#f5f5f5 152.7px 154.8px,#e6e6e6 154.8px 156.9px,#dcdcdc 156.9px 161.2px,#f5f5f5 161.2px 163.4px,#cdcdcd 163.4px 165.5px,#e1e1e1 165.5px 167.7px,#d2d2d2 167.7px 169.8px,#f5f5f5 169.8px 172.0px,#d7d7d7 172.0px 174.2px,#dcdcdc 174.2px 176.3px,#d2d2d2 176.3px 178.4px,#f5f5f5 178.4px 180.6px,#dcdcdc 180.6px 182.8px,#e1e1e1 182.8px 184.9px,#dcdcdc 184.9px 187.0px,#f5f5f5 187.0px 189.2px,#e1e1e1 189.2px 195.7px,#f0f0f0 195.7px 197.8px,#d7d7d7 197.8px 199.9px,#cdcdcd 199.9px 204.2px,#f5f5f5 204.2px 206.4px,#e1e1e1 206.4px 208.5px,#e6e6e6 208.5px 210.7px,#d7d7d7 210.7px 212.8px,#f0f0f0 212.8px 215.0px,#ebebeb 215.0px 221.4px,#f0f0f0 221.4px 223.6px,#d7d7d7 223.6px 225.8px,#c8c8c8 225.8px 227.9px,#dcdcdc 227.9px 230.0px,#f0f0f0 230.0px 232.2px,#ebebeb 232.2px 234.3px,#e6e6e6 234.3px 236.5px,#e1e1e1 236.5px 238.6px,#f0f0f0 238.6px 240.8px,#d7d7d7 240.8px 242.9px,#d2d2d2 242.9px 245.1px,#d7d7d7 245.1px 247.2px)"></div>
</div>
<div style="left:308.4px;top:184.0px;width:56.6px;height:8px;filter:blur(0.9px);opacity:1.0">
<div style="left:0;top:0.0px;width:100%;height:2.72px;background:linear-gradient(90deg,#f0f0f0 0.0px 2.1px,#ebebeb 2.1px 4.3px,#f5f5f5 4.3px 8.6px,#e1e1e1 8.6px 12.9px,#e6e6e6 12.9px 15.0px,#f5f5f5 15.0px 17.2px,#f0f0f0 17.2px 19.3px,#fafafa 19.3px 21.5px,#f5f5f5 21.5px 25.8px,#cdcdcd 25.8px 27.9px,#d2d2d2 27.9px 30.1px,#dcdcdc 30.1px 32.2px,#f0f0f0 32.2px 34.4px,#e1e1e1 34.4px 38.7px,#dcdcdc 38.7px 40.9px,#f0f0f0 40.9px 43.0px,#e1e1e1 43.0px 49.4px,#f0f0f0 49.4px 51.6px,#e6e6e6 51.6px 55.9px,#f0f0f0 55.9px 58.0px)"></div>
<div style="left:0;top:2.67px;width:100%;height:2.72px;background:linear-gradient(90deg,#d7d7d7 0.0px 2.1px,#e1e1e1 2.1px 4.3px,#d2d2d2 4.3px 6.4px,#f5f5f5 6.4px 8.6px,#cdcdcd 8.6px 10.8px,#d2d2d2 10.8px 12.9px,#d7d7d7 12.9px 15.0px,#f5f5f5 15.0px 17.2px,#dcdcdc 17.2px 19.3px,#e6e6e6 19.3px 21.5px,#e1e1e1 21.5px 23.6px,#f5f5f5 23.6px 25.8px,#afafaf 25.8px 27.9px,#b4b4b4 27.9px 30.1px,#b9b9b9 30.1px 32.2px,#f0f0f0 32.2px 34.4px,#cdcdcd 34.4px 36.5px,#c8c8c8 36.5px 40.9px,#f5f5f5 40.9px 43.0px,#c8c8c8 43.0px 45.1px,#d2d2d2 45.1px 47.3px,#cdcdcd 47.3px 49.4px,#f5f5f5 49.4px 51.6px,#dcdcdc 51.6px 55.9px,#d2d2d2 55.9px 58.0px)"></div>
<div style="left:0;top:5.33px;width:100%;height:2.72px;background:linear-gradient(90deg,#e6e6e6 0.0px 2.1px,#ebebeb 2.1px 6.4px,#fafafa 6.4px 8.6px,#e6e6e6 8.6px 10.8px,#f0f0f0 10.8px 12.9px,#d7d7d7 12.9px 15.0px,#ebebeb 15.0px 17.2px,#f0f0f0 17.2px 19.3px,#ebebeb 19.3px 21.5px,#f5f5f5 21.5px 23.6px,#ebebeb 23.6px 25.8px,#d7d7d7 25.8px 27.9px,#c8c8c8 27.9px 32.2px,#f5f5f5 32.2px 34.4px,#dcdcdc 34.4px 36.5px,#e1e1e1 36.5px 38.7px,#d2d2d2 38.7px 40.9px,#f5f5f5 40.9px 43.0px,#dcdcdc 43.0px 45.1px,#e1e1e1 45.1px 49.4px,#f0f0f0 49.4px 51.6px,#e6e6e6 51.6px 53.8px,#ebebeb 53.8px 58.0px)"></div>
</div>
<div style="left:315px;top:210.55px;width:240.4px;height:5.5px;filter:blur(0.9px);opacity:0.9">
<div style="left:0;top:0.0px;width:100%;height:1.88px;background:linear-gradient(90deg,#e6e6e6 0.0px 2.1px,#d7d7d7 2.1px 4.3px,#e1e1e1 4.3px 6.4px,#f5f5f5 6.4px 8.6px,#ebebeb 8.6px 10.8px,#e6e6e6 10.8px 15.0px,#f0f0f0 15.0px 17.2px,#d7d7d7 17.2px 19.3px,#e6e6e6 19.3px 21.5px,#d7d7d7 21.5px 23.6px,#f5f5f5 23.6px 25.8px,#e6e6e6 25.8px 30.1px,#e1e1e1 30.1px 32.2px,#f0f0f0 32.2px 34.4px,#e1e1e1 34.4px 36.5px,#d2d2d2 36.5px 40.9px,#f5f5f5 40.9px 43.0px,#d7d7d7 43.0px 49.4px,#f5f5f5 49.4px 51.6px,#d2d2d2 51.6px 53.8px,#cdcdcd 53.8px 58.0px,#f0f0f0 58.0px 60.2px,#dcdcdc 60.2px 62.3px,#d2d2d2 62.3px 64.5px,#dcdcdc 64.5px 66.6px,#f5f5f5 66.6px 71.0px,#f0f0f0 71.0px 75.2px,#f5f5f5 75.2px 77.4px,#dcdcdc 77.4px 79.5px,#e1e1e1 79.5px 83.8px,#f5f5f5 83.8px 86.0px,#f0f0f0 86.0px 88.1px,#ebebeb 88.1px 92.5px,#f5f5f5 92.5px 94.6px,#d2d2d2 94.6px 96.8px,#cdcdcd 96.8px 98.9px,#d7d7d7 98.9px 101.0px,#f0f0f0 101.0px 103.2px,#ebebeb 103.2px 105.3px,#e1e1e1 105.3px 107.5px,#f0f0f0 107.5px 109.6px,#f5f5f5 109.6px 111.8px,#ebebeb 111.8px 113.9px,#e6e6e6 113.9px 116.1px,#f0f0f0 116.1px 120.4px,#f5f5f5 120.4px 122.5px,#ebebeb 122.5px 126.8px,#f5f5f5 126.8px 129.0px,#e6e6e6 129.0px 131.2px,#ebebeb 131.2px 133.3px,#f0f0f0 133.3px 135.4px,#f5f5f5 135.4px 137.6px,#f0f0f0 137.6px 139.8px,#e6e6e6 139.8px 141.9px,#dcdcdc 141.9px 144.0px,#f5f5f5 144.0px 146.2px,#f0f0f0 146.2px 148.3px,#ebebeb 148.3px 150.5px,#e6e6e6 150.5px 152.7px,#f5f5f5 152.7px 154.8px,#e1e1e1 154.8px 159.1px,#d7d7d7 159.1px 161.2px,#f5f5f5 161.2px 163.4px,#e1e1e1 163.4px 165.5px,#e6e6e6 165.5px 167.7px,#d7d7d7 167.7px 169.8px,#f0f0f0 169.8px 172.0px,#ebebeb 172.0px 174.2px,#f0f0f0 174.2px 178.4px,#ebebeb 178.4px 180.6px,#e1e1e1 180.6px 182.8px,#e6e6e6 182.8px 184.9px,#cdcdcd 184.9px 187.0px,#f5f5f5 187.0px 189.2px,#ebebeb 189.2px 191.3px,#e1e1e1 191.3px 193.5px,#e6e6e6 193.5px 195.7px,#f5f5f5 195.7px 197.8px,#f0f0f0 197.8px 199.9px,#fafafa 199.9px 202.1px,#ebebeb 202.1px 204.2px,#f0f0f0 204.2px 206.4px,#d2d2d2 206.4px 208.5px,#d7d7d7 208.5px 210.7px,#d2d2d2 210.7px 212.8px,#f5f5f5 212.8px 215.0px,#e6e6e6 215.0px 217.1px,#ebebeb 217.1px 219.3px,#e1e1e1 219.3px 221.4px,#f0f0f0 221.4px 223.6px,#e1e1e1 223.6px 225.8px,#dcdcdc 225.8px 227.9px,#e1e1e1 227.9px 230.0px,#f0f0f0 230.0px 232.2px,#e6e6e6 232.2px 236.5px,#e1e1e1 236.5px 238.6px,#f0f0f0 238.6px 240.8px)"></div>
<div style="left:0;top:1.83px;width:100%;height:1.88px;background:linear-gradient(90deg,#c3c3c3 0.0px 4.3px,#bebebe 4.3px 6.4px,#f0f0f0 6.4px 8.6px,#cdcdcd 8.6px 10.8px,#d7d7d7 10.8px 12.9px,#cdcdcd 12.9px 15.0px,#f0f0f0 15.0px 17.2px,#afafaf 17.2px 19.3px,#aaaaaa 19.3px 21.5px,#b4b4b4 21.5px 23.6px,#f5f5f5 23.6px 25.8px,#c8c8c8 25.8px 27.9px,#cdcdcd 27.9px 30.1px,#c3c3c3 30.1px 32.2px,#f5f5f5 32.2px 34.4px,#afafaf 34.4px 36.5px,#b4b4b4 36.5px 38.7px,#b9b9b9 38.7px 40.9px,#f0f0f0 40.9px 43.0px,#b4b4b4 43.0px 47.3px,#aaaaaa 47.3px 49.4px,#fafafa 49.4px 51.6px,#aaaaaa 51.6px 53.8px,#afafaf 53.8px 55.9px,#aaaaaa 55.9px 58.0px,#f5f5f5 58.0px 60.2px,#b9b9b9 60.2px 62.3px,#c3c3c3 62.3px 64.5px,#bebebe 64.5px 66.6px,#f5f5f5 66.6px 68.8px,#dcdcdc 68.8px 75.2px,#f5f5f5 75.2px 77.4px,#cdcdcd 77.4px 83.8px,#f5f5f5 83.8px 86.0px,#dcdcdc 86.0px 90.3px,#e1e1e1 90.3px 92.5px,#f0f0f0 92.5px 94.6px,#b9b9b9 94.6px 96.8px,#afafaf 96.8px 101.0px,#f5f5f5 101.0px 103.2px,#dcdcdc 103.2px 105.3px,#e1e1e1 105.3px 107.5px,#dcdcdc 107.5px 109.6px,#f5f5f5 109.6px 111.8px,#d2d2d2 111.8px 113.9px,#e1e1e1 113.9px 116.1px,#dcdcdc 116.1px 118.2px,#f5f5f5 118.2px 120.4px,#dcdcdc 120.4px 122.5px,#e6e6e6 122.5px 124.7px,#ebebeb 124.7px 126.8px,#f0f0f0 126.8px 129.0px,#d7d7d7 129.0px 131.2px,#d2d2d2 131.2px 133.3px,#cdcdcd 133.3px 135.4px,#f5f5f5 135.4px 137.6px,#bebebe 137.6px 139.8px,#c8c8c8 139.8px 141.9px,#d2d2d2 141.9px 144.0px,#f0f0f0 144.0px 146.2px,#e6e6e6 146.2px 148.3px,#dcdcdc 148.3px 152.7px,#f0f0f0 152.7px 154.8px,#d2d2d2 154.8px 161.2px,#f0f0f0 161.2px 163.4px,#c3c3c3 163.4px 165.5px,#bebebe 165.5px 167.7px,#d2d2d2 167.7px 169.8px,#fafafa 169.8px 172.0px,#e6e6e6 172.0px 174.2px,#dcdcdc 174.2px 178.4px,#f0f0f0 178.4px 180.6px,#c3c3c3 180.6px 182.8px,#b9b9b9 182.8px 184.9px,#d2d2d2 184.9px 187.0px,#f5f5f5 187.0px 189.2px,#d7d7d7 189.2px 191.3px,#dcdcdc 191.3px 193.5px,#d7d7d7 193.5px 195.7px,#f0f0f0 195.7px 197.8px,#ebebeb 197.8px 199.9px,#e1e1e1 199.9px 204.2px,#f5f5f5 204.2px 206.4px,#bebebe 206.4px 208.5px,#afafaf 208.5px 210.7px,#b4b4b4 210.7px 212.8px,#fafafa 212.8px 215.0px,#e6e6e6 215.0px 217.1px,#d7d7d7 217.1px 219.3px,#e1e1e1 219.3px 221.4px,#f5f5f5 221.4px 223.6px,#c3c3c3 223.6px 227.9px,#d2d2d2 227.9px 230.0px,#f0f0f0 230.0px 232.2px,#dcdcdc 232.2px 234.3px,#d2d2d2 234.3px 236.5px,#d7d7d7 236.5px 238.6px,#f5f5f5 238.6px 240.8px)"></div>
<div style="left:0;top:3.67px;width:100%;height:1.88px;background:linear-gradient(90deg,#d2d2d2 0.0px 2.1px,#e1e1e1 2.1px 4.3px,#d7d7d7 4.3px 6.4px,#f5f5f5 6.4px 8.6px,#ebebeb 8.6px 12.9px,#dcdcdc 12.9px 15.0px,#f5f5f5 15.0px 17.2px,#d2d2d2 17.2px 19.3px,#c8c8c8 19.3px 23.6px,#f0f0f0 23.6px 25.8px,#dcdcdc 25.8px 27.9px,#e6e6e6 27.9px 30.1px,#e1e1e1 30.1px 32.2px,#f5f5f5 32.2px 34.4px,#d2d2d2 34.4px 40.9px,#f5f5f5 40.9px 43.0px,#c8c8c8 43.0px 45.1px,#cdcdcd 45.1px 47.3px,#d2d2d2 47.3px 49.4px,#ebebeb 49.4px 51.6px,#d2d2d2 51.6px 55.9px,#c8c8c8 55.9px 58.0px,#f5f5f5 58.0px 60.2px,#dcdcdc 60.2px 62.3px,#cdcdcd 62.3px 64.5px,#d2d2d2 64.5px 66.6px,#f5f5f5 66.6px 68.8px,#f0f0f0 68.8px 71.0px,#e1e1e1 71.0px 73.1px,#ebebeb 73.1px 75.2px,#f0f0f0 75.2px 77.4px,#cdcdcd 77.4px 79.5px,#e6e6e6 79.5px 81.7px,#dcdcdc 81.7px 83.8px,#f5f5f5 83.8px 86.0px,#e6e6e6 86.0px 88.1px,#f0f0f0 88.1px 92.5px,#f5f5f5 92.5px 94.6px,#d2d2d2 94.6px 98.9px,#cdcdcd 98.9px 101.0px,#f0f0f0 101.0px 107.5px,#ebebeb 107.5px 109.6px,#f5f5f5 109.6px 111.8px,#e6e6e6 111.8px 113.9px,#ebebeb 113.9px 120.4px,#f0f0f0 120.4px 124.7px,#e6e6e6 124.7px 126.8px,#ebebeb 126.8px 129.0px,#e1e1e1 129.0px 133.3px,#e6e6e6 133.3px 135.4px,#f0f0f0 135.4px 137.6px,#d7d7d7 137.6px 141.9px,#e6e6e6 141.9px 144.0px,#f0f0f0 144.0px 146.2px,#e1e1e1 146.2px 150.5px,#e6e6e6 150.5px 152.7px,#f0f0f0 152.7px 154.8px,#e1e1e1 154.8px 159.1px,#d7d7d7 159.1px 161.2px,#f5f5f5 161.2px 163.4px,#e1e1e1 163.4px 165.5px,#d7d7d7 165.5px 169.8px,#f0f0f0 169.8px 176.3px,#ebebeb 176.3px 178.4px,#f0f0f0 178.4px 180.6px,#d7d7d7 180.6px 187.0px,#f5f5f5 187.0px 189.2px,#f0f0f0 189.2px 193.5px,#e6e6e6 193.5px 195.7px,#fafafa 195.7px 197.8px,#f5f5f5 197.8px 199.9px,#e6e6e6 199.9px 202.1px,#e1e1e1 202.1px 204.2px,#f5f5f5 204.2px 206.4px,#cdcdcd 206.4px 208.5px,#d2d2d2 208.5px 210.7px,#cdcdcd 210.7px 212.8px,#f0f0f0 212.8px 215.0px,#ebebeb 215.0px 219.3px,#f0f0f0 219.3px 223.6px,#d2d2d2 223.6px 225.8px,#e1e1e1 225.8px 227.9px,#d7d7d7 227.9px 230.0px,#f0f0f0 230.0px 232.2px,#dcdcdc 232.2px 234.3px,#e1e1e1 234.3px 236.5px,#e6e6e6 236.5px 238.6px,#f5f5f5 238.6px 240.8px)"></div>
</div>
<span class="t" style="left:314.7px;top:215px;font-size:7px;line-height:10px;color:#6a6a6a;font-family:'Liberation Serif','Noto Serif CJK SC',serif;transform:translate3d(0,0.2px,0) scaleX(1.0420);filter:blur(0.3px);">ただし、この診断を感じて結果を出力するには、これを選び選に選びた後</span>
</section>
<section id="toolbar">
<div style="left:4px;top:42.5px;width:27px;height:513.5px;background:#535353;"></div>
<div style="left:4px;top:42.5px;width:27px;height:8.0px;background:#464646;"></div>
<svg style="left:7.6px;top:44.4px;" width="6" height="4.4" viewBox="0 0 6 4.4"><path d="M0.2 0.2 L2.4 2.2 L0.2 4.2 Z M3.2 0.2 L5.4 2.2 L3.2 4.2 Z" fill="#d8d8d8"/></svg>
<div style="left:10.4px;top:53.2px;width:14.5px;height:2.6px;background:repeating-linear-gradient(90deg,#484848 0 2.1px,#535353 2.1px 2.9px)"></div>
<svg style="left:12px;top:66.6px;" width="11.2" height="11" viewBox="0 0 11.2 11"><path d="M5.6 0 L7.6 2.4 H6.3 V4.8 H8.8 V3.5 L11.2 5.5 L8.8 7.5 V6.2 H6.3 V8.6 H7.6 L5.6 11 L3.6 8.6 H4.9 V6.2 H2.4 V7.5 L0 5.5 L2.4 3.5 V4.8 H4.9 V2.4 H3.6 Z" fill="#e4e4e4"/></svg>
<svg style="left:25.1px;top:76.19999999999999px;" width="2.7" height="2.7" viewBox="0 0 2.7 2.7"><path d="M2.7 0 V2.7 H0 Z" fill="#b4b4b4"/></svg>
<svg style="left:12px;top:85px;" width="12" height="10" viewBox="0 0 12 10"><rect x="0.5" y="0.5" width="11" height="9" fill="none" stroke="#e4e4e4" stroke-width="1" stroke-dasharray="2.2 1.4"/></svg>
<svg style="left:25.1px;top:94.1px;" width="2.7" height="2.7" viewBox="0 0 2.7 2.7"><path d="M2.7 0 V2.7 H0 Z" fill="#b4b4b4"/></svg>
<svg style="left:12.5px;top:104.3px;" width="12.5" height="10.8" viewBox="0 0 12.5 10.8"><ellipse cx="6.6" cy="4" rx="5.4" ry="3.4" fill="none" stroke="#e4e4e4" stroke-width="1" transform="rotate(-12 6.6 4)"/><circle cx="2.2" cy="7.2" r="1" fill="none" stroke="#e4e4e4" stroke-width="0.8"/><path d="M2.6 8 Q3.6 9.4 2.8 10.6" fill="none" stroke="#e4e4e4" stroke-width="0.8"/></svg>
<svg style="left:25.1px;top:113.8px;" width="2.7" height="2.7" viewBox="0 0 2.7 2.7"><path d="M2.7 0 V2.7 H0 Z" fill="#b4b4b4"/></svg>
<svg style="left:13px;top:121.9px;" width="11.6" height="11.8" viewBox="0 0 11.6 11.8"><rect x="0.4" y="0.4" width="8.6" height="8.4" fill="none" stroke="#bdbdbd" stroke-width="0.8" stroke-dasharray="1 0.8"/><rect x="1.9" y="2.2" width="4.9" height="5.2" fill="#f0f0f0"/><path d="M5.9 6.2 L11.5 9.1 L9.0 9.7 L8.2 12.1 Z" fill="#ffffff" stroke="#535353" stroke-width="0.6"/></svg>
<svg style="left:25.1px;top:131.6px;" width="2.7" height="2.7" viewBox="0 0 2.7 2.7"><path d="M2.7 0 V2.7 H0 Z" fill="#b4b4b4"/></svg>
<svg style="left:10.7px;top:139.7px;" width="13.3" height="12.1" viewBox="0 0 13.3 12.1"><path d="M0 2.6 H9.6 V12.1 M3 0 V9 H13.3" fill="none" stroke="#e4e4e4" stroke-width="1.15"/></svg>
<svg style="left:25.1px;top:150.1px;" width="2.7" height="2.7" viewBox="0 0 2.7 2.7"><path d="M2.7 0 V2.7 H0 Z" fill="#b4b4b4"/></svg>
<svg style="left:12px;top:159.8px;" width="12.5" height="10.2" viewBox="0 0 12.5 10.2"><rect x="0.5" y="0.5" width="11.5" height="9.2" fill="none" stroke="#e4e4e4" stroke-width="1"/><path d="M0.5 0.5 L12 9.7 M12 0.5 L0.5 9.7" stroke="#d6d6d6" stroke-width="0.8"/></svg>
<svg style="left:12px;top:177.9px;" width="11.7" height="11.1" viewBox="0 0 11.7 11.1"><path d="M0.6 10.5 L1 8.4 L6.4 3 L8.1 4.7 L2.7 10.1 Z" fill="none" stroke="#e4e4e4" stroke-width="0.9"/><path d="M5.8 2 L6.8 1 L7.7 1.9 L9.2 0.4 a1.4 1.4 0 0 1 2 2 L9.8 3.9 L10.7 4.9 L9.7 5.9 Z" fill="#e4e4e4"/></svg>
<svg style="left:25.1px;top:187.79999999999998px;" width="2.7" height="2.7" viewBox="0 0 2.7 2.7"><path d="M2.7 0 V2.7 H0 Z" fill="#b4b4b4"/></svg>
<svg style="left:11.2px;top:195.7px;" width="13.1" height="13.1" viewBox="0 0 13.1 13.1"><g transform="rotate(-42 7 7.4)"><rect x="0" y="4.3" width="14" height="6.4" rx="1.9" fill="#e4e4e4"/><rect x="4.2" y="4.3" width="5.6" height="6.4" fill="#535353"/><rect x="4.7" y="4.8" width="4.6" height="5.4" fill="none" stroke="#e4e4e4" stroke-width="0.8"/><circle cx="7" cy="7.5" r="1.25" fill="none" stroke="#e4e4e4" stroke-width="0.8"/></g><path d="M0.6 5.2 A3.1 3.1 0 0 1 5.6 1.8" fill="none" stroke="#cfcfcf" stroke-width="0.8" stroke-dasharray="1.6 0.7"/></svg>
<svg style="left:25.1px;top:206.1px;" width="2.7" height="2.7" viewBox="0 0 2.7 2.7"><path d="M2.7 0 V2.7 H0 Z" fill="#b4b4b4"/></svg>
<svg style="left:12px;top:215.2px;" width="11" height="11.8" viewBox="0 0 11 11.8"><path d="M10.3 0 L11 0.7 L6.3 7.9 L4.4 6.2 Z" fill="#e4e4e4"/><path d="M3.8 6.7 L5.8 8.5 C5.4 11 2.8 12 0 11.7 C1.2 10.8 1.1 9.8 1.5 8.5 C1.9 7.2 2.9 6.6 3.8 6.7 Z" fill="#e4e4e4"/></svg>
<svg style="left:25.1px;top:225.1px;" width="2.7" height="2.7" viewBox="0 0 2.7 2.7"><path d="M2.7 0 V2.7 H0 Z" fill="#b4b4b4"/></svg>
<svg style="left:13px;top:234px;" width="9.8" height="11.4" viewBox="0 0 9.8 11.4"><path d="M4.9 0 a2.3 2.3 0 0 1 2.3 2.3 C7.2 3.8 6.2 4.4 6.2 5.6 V6.4 H9.2 a0.6 0.6 0 0 1 0.6 0.6 V9 H0 V7 a0.6 0.6 0 0 1 0.6 -0.6 H3.6 V5.6 C3.6 4.4 2.6 3.8 2.6 2.3 A2.3 2.3 0 0 1 4.9 0 Z M0.4 9.8 H9.4 V11.2 H0.4 Z" fill="#e4e4e4"/></svg>
<svg style="left:25.1px;top:244.1px;" width="2.7" height="2.7" viewBox="0 0 2.7 2.7"><path d="M2.7 0 V2.7 H0 Z" fill="#b4b4b4"/></svg>
<svg style="left:11.7px;top:252.9px;" width="11.8" height="10.7" viewBox="0 0 11.8 10.7"><path d="M11.2 0.1 L11.6 0.5 L6.6 6.6 L5.4 5.6 Z" fill="#e4e4e4"/><path d="M4.9 6.1 L6.1 7.2 C5.6 9.4 3.6 10.6 1.4 10.4 C2.5 9.7 2.5 8.8 2.9 7.7 C3.3 6.6 4.1 6 4.9 6.1 Z" fill="#e4e4e4"/><path d="M0 3.4 L2.6 1 V2.6 C4.4 2.2 5.4 2.6 6 3.2 C5 3 4 3.2 2.6 4 V5.6 Z" fill="#e4e4e4"/><path d="M8.8 5.4 A3.4 3.4 0 0 1 7.4 9.6" fill="none" stroke="#c8c8c8" stroke-width="0.6" stroke-dasharray="1 0.8"/></svg>
<svg style="left:25.1px;top:262.1px;" width="2.7" height="2.7" viewBox="0 0 2.7 2.7"><path d="M2.7 0 V2.7 H0 Z" fill="#b4b4b4"/></svg>
<svg style="left:11px;top:270px;" width="13" height="11.8" viewBox="0 0 13 11.8"><g transform="rotate(-38 8 7.6)"><rect x="3.4" y="5" width="9.8" height="5.2" rx="0.8" fill="#e4e4e4"/><rect x="3.9" y="5.5" width="3.4" height="4.2" fill="#535353"/></g><path d="M0.4 1 L5.6 5.4 M5 0.6 L1.6 5.8" stroke="#e4e4e4" stroke-width="0.9"/><circle cx="1.2" cy="6.2" r="0.9" fill="none" stroke="#e4e4e4" stroke-width="0.6"/><circle cx="5.9" cy="5.9" r="0.9" fill="none" stroke="#e4e4e4" stroke-width="0.6"/></svg>
<svg style="left:25.1px;top:281.1px;" width="2.7" height="2.7" viewBox="0 0 2.7 2.7"><path d="M2.7 0 V2.7 H0 Z" fill="#b4b4b4"/></svg>
<div style="left:12px;top:289.9px;width:12.2px;height:9.6px;border:1px solid #dcdcdc;background:linear-gradient(90deg,#2e2e2e,#cfcfcf)"></div>
<svg style="left:25.1px;top:299.1px;" width="2.7" height="2.7" viewBox="0 0 2.7 2.7"><path d="M2.7 0 V2.7 H0 Z" fill="#b4b4b4"/></svg>
<svg style="left:13.8px;top:308.4px;" width="9" height="10.4" viewBox="0 0 9 10.4"><path d="M4.5 0 C5.6 2.6 9 5 9 7 A4.5 3.6 0 0 1 0 7 C0 5 3.4 2.6 4.5 0 Z" fill="#e4e4e4"/></svg>
<svg style="left:25.1px;top:317.8px;" width="2.7" height="2.7" viewBox="0 0 2.7 2.7"><path d="M2.7 0 V2.7 H0 Z" fill="#b4b4b4"/></svg>
<svg style="left:12px;top:326.9px;" width="11.5" height="11.8" viewBox="0 0 11.5 11.8"><circle cx="7.2" cy="4.2" r="4.1" fill="#e4e4e4"/><path d="M4.6 7 L0.5 11.3" stroke="#e4e4e4" stroke-width="1.4"/></svg>
<svg style="left:25.1px;top:336.6px;" width="2.7" height="2.7" viewBox="0 0 2.7 2.7"><path d="M2.7 0 V2.7 H0 Z" fill="#b4b4b4"/></svg>
<svg style="left:12.8px;top:345.8px;" width="10.7" height="11.4" viewBox="0 0 10.7 11.4"><path d="M6.6 0.3 L10.4 3.4 L9.2 4.9 L5.4 1.8 Z" fill="#e4e4e4"/><path d="M5 2.4 L8.7 5.4 L6.6 9.6 L0.6 11 L1.4 5 Z" fill="none" stroke="#e4e4e4" stroke-width="1"/><path d="M0.9 10.7 L4.4 6.6" stroke="#e4e4e4" stroke-width="0.8"/><circle cx="4.7" cy="6.3" r="0.9" fill="#e4e4e4"/></svg>
<svg style="left:25.1px;top:356.1px;" width="2.7" height="2.7" viewBox="0 0 2.7 2.7"><path d="M2.7 0 V2.7 H0 Z" fill="#b4b4b4"/></svg>
<span class="t" style="left:13.6px;top:361px;font-size:14.5px;line-height:20px;color:#e4e4e4;font-weight:700;font-family:'Liberation Serif','Noto Serif CJK SC',serif;transform:translate3d(0,0.12px,0) scaleX(0.9719);">T</span>
<svg style="left:25.1px;top:374.6px;" width="2.7" height="2.7" viewBox="0 0 2.7 2.7"><path d="M2.7 0 V2.7 H0 Z" fill="#b4b4b4"/></svg>
<svg style="left:14.6px;top:383px;" width="7.6" height="11.7" viewBox="0 0 7.6 11.7"><path d="M0.6 0.6 L7 7 H4.4 L5.8 10.6 L4.2 11.2 L2.8 7.6 L0.6 9.6 Z" fill="#111" stroke="#e4e4e4" stroke-width="0.9" stroke-linejoin="round"/></svg>
<svg style="left:25.1px;top:392.8px;" width="2.7" height="2.7" viewBox="0 0 2.7 2.7"><path d="M2.7 0 V2.7 H0 Z" fill="#b4b4b4"/></svg>
<svg style="left:12.8px;top:402.7px;" width="10.3" height="8.9" viewBox="0 0 10.3 8.9"><path d="M0.2 8.7 L10.1 0.2" stroke="#e4e4e4" stroke-width="1.1"/></svg>
<svg style="left:25.1px;top:411.6px;" width="2.7" height="2.7" viewBox="0 0 2.7 2.7"><path d="M2.7 0 V2.7 H0 Z" fill="#b4b4b4"/></svg>
<div style="left:6.8px;top:417.3px;width:21.7px;height:16.5px;background:#383838;border-radius:1.5px"></div>
<svg style="left:12.3px;top:419.8px;" width="12" height="12" viewBox="-0.2 0 12.6 12.6"><g fill="#e4e4e4"><rect x="2.9" y="1.7" width="1.8" height="7" rx="0.9" transform="rotate(-9 3.8 8.6)"/><rect x="5" y="0.2" width="1.8" height="8.4" rx="0.9" transform="rotate(-2 5.9 8.6)"/><rect x="7.1" y="0.9" width="1.8" height="7.7" rx="0.9" transform="rotate(5 8 8.6)"/><rect x="9" y="2.9" width="1.6" height="6" rx="0.8" transform="rotate(15 9.8 8.9)"/><path d="M2.9 6.9 H10.9 V8.8 C10.9 11.2 9.3 12.6 7 12.6 C5.1 12.6 4.1 11.9 3.1 10.5 L0.4 6.9 C-0.2 6 0.9 5.1 1.6 5.9 L2.9 7.4 Z"/></g></svg>
<svg style="left:25.1px;top:429.8px;" width="2.7" height="2.7" viewBox="0 0 2.7 2.7"><path d="M2.7 0 V2.7 H0 Z" fill="#b4b4b4"/></svg>
<svg style="left:11.8px;top:438.4px;" width="12" height="11.6" viewBox="0 0 12 11.6"><circle cx="4.6" cy="4.6" r="4" fill="none" stroke="#e4e4e4" stroke-width="1.1"/><path d="M7.5 7.5 L11.5 11.1" stroke="#e4e4e4" stroke-width="1.5"/><path d="M2.4 3.6 A2.6 2.6 0 0 1 4.4 2.2" fill="none" stroke="#bbb" stroke-width="0.6"/></svg>
<svg style="left:11.6px;top:461.8px;" width="12" height="2.8" viewBox="0 0 12 2.8"><circle cx="1.4" cy="1.4" r="1.3" fill="#e4e4e4"/><circle cx="6" cy="1.4" r="1.3" fill="#e4e4e4"/><circle cx="10.6" cy="1.4" r="1.3" fill="#e4e4e4"/></svg>
<svg style="left:25.1px;top:467.1px;" width="2.7" height="2.7" viewBox="0 0 2.7 2.7"><path d="M2.7 0 V2.7 H0 Z" fill="#b4b4b4"/></svg>
<div style="left:7.2px;top:477.2px;width:4.0px;height:4.0px;background:#111;border:0.7px solid #e0e0e0"></div>
<div style="left:9.4px;top:479.4px;width:4.2px;height:4.2px;background:#fff;border:0.7px solid #e0e0e0"></div>
<svg style="left:19.2px;top:476.8px;" width="6.6" height="6.6" viewBox="0 0 6.6 6.6"><path d="M0 1.6 L1.8 0 V1.1 H5.6 V4.6 H6.6 L5 6.6 L3.6 4.6 H4.6 V2.1 H1.8 V3.2 Z" fill="#e4e4e4"/></svg>
<div style="left:14px;top:495px;width:13.3px;height:13px;background:#ffffff;border:0.8px solid #e8e8e8"></div>
<div style="left:6.8px;top:487.8px;width:13.4px;height:13.2px;background:#9b9b9b;border:1px solid #dedede;box-shadow:0 0 0 0.6px #535353"></div>
<svg style="left:11.2px;top:516.7px;" width="12.6" height="9.4" viewBox="0 0 12.6 9.4"><rect x="0.5" y="0.5" width="11.6" height="8.4" fill="none" stroke="#e4e4e4" stroke-width="0.9"/><circle cx="6.3" cy="4.7" r="2.6" fill="none" stroke="#bdbdbd" stroke-width="0.8" stroke-dasharray="1.2 0.8"/></svg>
<svg style="left:11.2px;top:535px;" width="12.6" height="9.8" viewBox="0 0 12.6 9.8"><rect x="0.5" y="3.2" width="8" height="6" rx="0.8" fill="none" stroke="#e4e4e4" stroke-width="0.9"/><rect x="4" y="0.5" width="8" height="6" rx="0.8" fill="#535353" stroke="#e4e4e4" stroke-width="0.9"/></svg>
<svg style="left:25.1px;top:545.6px;" width="2.7" height="2.7" viewBox="0 0 2.7 2.7"><path d="M2.7 0 V2.7 H0 Z" fill="#b4b4b4"/></svg>
</section>
<section id="dialog">
<div style="left:142.8px;top:219.1px;width:475.4px;height:260.3px;background:#535353;box-shadow:0 0 0 0.7px rgba(20,20,20,0.5),0 2px 10px 1px rgba(0,0,0,0.4)"></div>
<div style="left:142.8px;top:219.1px;width:475.4px;height:21.7px;background:#ffffff;"></div>
<div style="left:142.8px;top:240.8px;width:475.4px;height:1.0px;background:#444444;"></div>
<span class="t" style="left:149.3px;top:223px;font-size:8.8px;line-height:12px;color:#000;font-weight:500;transform:translate3d(0,0.6px,0) scaleX(0.9477);">画像解像度</span>
<svg style="left:603.7px;top:225.8px;" width="7.4" height="7.4" viewBox="0 0 7.4 7.4"><path d="M0.3 0.3 L7.1 7.1 M7.1 0.3 L0.3 7.1" stroke="#1a1a1a" stroke-width="0.95" fill="none"/></svg>
<div id="preview" style="left:149.8px;top:248px;width:196.6px;height:213.8px;background:#fff;overflow:hidden">
<span class="pv" style="left:-2.0px;top:3.6px;letter-spacing:0.75px">感じる方も多いかもしれ</span>
<span class="pv" style="left:-6.0px;top:38.4px;letter-spacing:1.3px">ただし、質問の数や内容</span>
<span class="pv" style="left:-5.2px;top:73.2px;letter-spacing:1.25px">果は本質的には変わりま</span>
<span class="pv" style="left:-2.8px;top:142.8px;letter-spacing:1.1px">問を1問ずつ解説してま</span>
<span class="pv" style="left:-2.0px;top:177.6px;letter-spacing:0.95px">ていただきます。</span>
</div>
<span class="t" style="left:407.7px;top:249px;font-size:9.5px;line-height:13px;color:#ececec;font-weight:500;transform:translate3d(0,0.4px,0) scaleX(0.8952);">画像サイズ :</span>
<span class="t" style="left:464px;top:249px;font-size:9.5px;line-height:13px;color:#e6e6e6;transform:translate3d(0,0.4px,0) scaleX(0.9147);"><i>1.27M (</i>変更前は<i> 3.10M)</i></span>
<svg style="left:597px;top:253px;" width="7.4" height="7.4" viewBox="0 0 7.4 7.4"><circle cx="3.7" cy="3.7" r="2.3" fill="none" stroke="#e6e6e6" stroke-width="1.7"/><circle cx="3.7" cy="3.7" r="3.4" fill="none" stroke="#e6e6e6" stroke-width="1.2" stroke-dasharray="1.3 1.37"/></svg>
<svg style="left:605.6px;top:258.2px;" width="2.6" height="1.8" viewBox="0 0 2.6 1.8"><path d="M0 0 H2.6 L1.3 1.8 Z" fill="#d8d8d8"/></svg>
<span class="t" style="left:430.4px;top:270px;font-size:9.5px;line-height:13px;color:#ececec;font-weight:500;transform:translate3d(0,0.1px,0) scaleX(1.0008);">寸法 :</span>
<div style="left:463.3px;top:271.3px;width:11.3px;height:11.9px;background:#464646;border:1px solid #5c5c5c;border-radius:1.5px"></div>
<svg style="left:466.4px;top:276.20000000000005px;" width="5.2" height="3.2" viewBox="0 0 5.2 3.2"><path d="M0.3 0.3 L2.6 2.7 L4.9 0.3" fill="none" stroke="#c4c4c4" stroke-width="1.05"/></svg>
<span class="t" style="left:482.2px;top:270px;font-size:9.5px;line-height:13px;color:#e6e6e6;transform:translate3d(0,0.77px,0) scaleX(0.9731);">960 px × 1387 px</span>
<span class="t" style="left:393.1px;top:288px;font-size:9.5px;line-height:13px;color:#ececec;font-weight:500;transform:translate3d(0,0.5px,0) scaleX(0.8309);">合わせる サイズ :</span>
<div style="left:460px;top:289.4px;width:150.4px;height:11.4px;background:#464646;border:1px solid #5c5c5c;border-radius:1.5px"></div>
<span class="t" style="left:465.9px;top:288px;font-size:9.5px;line-height:13px;color:#e6e6e6;transform:translate3d(0,0.5px,0) scaleX(0.7234);">カスタム</span>
<svg style="left:601.4px;top:294.0px;" width="5.2" height="3.2" viewBox="0 0 5.2 3.2"><path d="M0.3 0.3 L2.6 2.7 L4.9 0.3" fill="none" stroke="#c4c4c4" stroke-width="1.05"/></svg>
<span class="t" style="left:426.4px;top:311px;font-size:9.5px;line-height:13px;color:#ececec;font-weight:500;transform:translate3d(0,0.2px,0) scaleX(0.9790);">幅<i>(D) :</i></span>
<div style="left:460px;top:309.8px;width:48.8px;height:14.8px;background:#464646;border:1px solid #5c5c5c;border-radius:1.5px"></div>
<span class="t" style="left:464px;top:311px;font-size:10px;line-height:14px;color:#efefef;transform:translate3d(0,0.1px,0) scaleX(0.8509);">960</span>
<div style="left:516px;top:309.8px;width:94.4px;height:14.8px;background:#464646;border:1px solid #5c5c5c;border-radius:1.5px"></div>
<span class="t" style="left:522.8px;top:311px;font-size:10px;line-height:14px;color:#efefef;transform:translate3d(0,0.1px,0) scaleX(0.9039);">pixel</span>
<svg style="left:601.4px;top:316.40000000000003px;" width="5.2" height="3.2" viewBox="0 0 5.2 3.2"><path d="M0.3 0.3 L2.6 2.7 L4.9 0.3" fill="none" stroke="#c4c4c4" stroke-width="1.05"/></svg>
<svg style="left:399px;top:315.8px;" width="19" height="25" viewBox="0 0 19 25"><path d="M18.4 0.5 H2.4 Q0.5 0.5 0.5 2.4 V7" fill="none" stroke="#a9a9a9" stroke-width="0.9"/><path d="M0.5 18 V22.2 Q0.5 24.1 2.4 24.1 H11.8" fill="none" stroke="#a9a9a9" stroke-width="0.9"/></svg>
<div style="left:395.7px;top:322.6px;width:10.3px;height:11.2px;background:#303030;border-radius:1px"></div>
<svg style="left:398.2px;top:323.6px;" width="5.4" height="9.2" viewBox="0 0 5.4 9.2"><rect x="0.9" y="0.6" width="3.6" height="4.2" rx="1.7" fill="none" stroke="#f4f4f4" stroke-width="1.15"/><rect x="0.9" y="4.4" width="3.6" height="4.2" rx="1.7" fill="none" stroke="#f4f4f4" stroke-width="1.15"/></svg>
<span class="t" style="left:419.7px;top:333px;font-size:9.5px;line-height:13px;color:#ececec;font-weight:500;transform:translate3d(0,0.1px,0) scaleX(0.8985);">高さ<i>(G) :</i></span>
<div style="left:460px;top:331.8px;width:48.8px;height:14.8px;background:#464646;border:1px solid #5c5c5c;border-radius:1.5px"></div>
<span class="t" style="left:464px;top:333px;font-size:10px;line-height:14px;color:#efefef;transform:translate3d(0,0.1px,0) scaleX(0.8404);">1387</span>
<div style="left:516px;top:331.4px;width:94.6px;height:15.6px;background:#464646;border:1.25px solid #2659a8;border-radius:1.5px"></div>
<span class="t" style="left:522.8px;top:333px;font-size:10px;line-height:14px;color:#efefef;transform:translate3d(0,0.1px,0) scaleX(0.9039);">pixel</span>
<svg style="left:601.4px;top:338.40000000000003px;" width="5.2" height="3.2" viewBox="0 0 5.2 3.2"><path d="M0.3 0.3 L2.6 2.7 L4.9 0.3" fill="none" stroke="#c4c4c4" stroke-width="1.05"/></svg>
<span class="t" style="left:408.5px;top:355px;font-size:9.5px;line-height:13px;color:#ececec;font-weight:500;transform:translate3d(0,0.4px,0) scaleX(0.9644);">解像度<i>(R) :</i></span>
<div style="left:460px;top:353.8px;width:48.8px;height:14.6px;background:#464646;border:1px solid #5c5c5c;border-radius:1.5px"></div>
<span class="t" style="left:464px;top:355px;font-size:10px;line-height:14px;color:#efefef;transform:translate3d(0,0.1px,0) scaleX(0.8509);">200</span>
<div style="left:516px;top:353.8px;width:94.4px;height:14.6px;background:#464646;border:1px solid #5c5c5c;border-radius:1.5px"></div>
<span class="t" style="left:522.8px;top:355px;font-size:10px;line-height:14px;color:#efefef;transform:translate3d(0,0.1px,0) scaleX(0.9256);">pixel/inch</span>
<svg style="left:601.4px;top:360.40000000000003px;" width="5.2" height="3.2" viewBox="0 0 5.2 3.2"><path d="M0.3 0.3 L2.6 2.7 L4.9 0.3" fill="none" stroke="#c4c4c4" stroke-width="1.05"/></svg>
<div style="left:379.2px;top:378.7px;width:9.0px;height:9.3px;background:#f0f0f0;border-radius:1.6px"></div>
<svg style="left:380.6px;top:380.6px;" width="6.4" height="5.6" viewBox="0 0 6.4 5.6"><path d="M0.6 2.8 L2.4 4.6 L5.8 0.6" fill="none" stroke="#333" stroke-width="1.3"/></svg>
<span class="t" style="left:393.1px;top:376px;font-size:9.5px;line-height:13px;color:#e6e6e6;transform:translate3d(0,0.7px,0) scaleX(0.8918);">再サンプル<i>(S) :</i></span>
<div style="left:460px;top:376px;width:150.4px;height:14.8px;background:#464646;border:1px solid #5c5c5c;border-radius:1.5px"></div>
<span class="t" style="left:465.9px;top:376px;font-size:9.5px;line-height:13px;color:#e6e6e6;transform:translate3d(0,0.7px,0) scaleX(0.8391);">バイキュービック法 - シャープ<i> (</i>縮小<i>)</i></span>
<svg style="left:602.8px;top:382.40000000000003px;" width="5.2" height="3.2" viewBox="0 0 5.2 3.2"><path d="M0.3 0.3 L2.6 2.7 L4.9 0.3" fill="none" stroke="#c4c4c4" stroke-width="1.05"/></svg>
<div style="left:372.8px;top:446.2px;width:115.4px;height:18.6px;border:1.2px solid #d4d4d4;border-radius:9.3px"></div>
<span class="t" style="left:424.6px;top:447px;font-size:10.5px;line-height:15px;color:#f0f0f0;transform:translate3d(0,0.74px,0) scaleX(0.8041);">OK</span>
<div style="left:495.3px;top:446.2px;width:114.9px;height:18.6px;border:1px solid #7d7d7d;border-radius:9.3px"></div>
<span class="t" style="left:533.1px;top:448px;font-size:9.5px;line-height:13px;color:#e6e6e6;transform:translate3d(0,0.9px,0) scaleX(0.7934);">キャンセル</span>
</section>
<section id="panels">
<div style="left:842px;top:42.5px;width:182px;height:514.3px;background:#3d3d3d;"></div>
<div style="left:1022.9px;top:51px;width:1.1px;height:505px;background:#464646;"></div>
<div style="left:842px;top:42.5px;width:182px;height:7.5px;background:#424242;"></div>
<div style="left:842px;top:42.5px;width:178.8px;height:7.5px;background:#424242;"></div>
<svg style="left:1011.6px;top:44.6px;" width="6" height="4" viewBox="0 0 6 4"><path d="M0.2 0.2 L2.4 2 L0.2 3.8 Z M3.2 0.2 L5.4 2 L3.2 3.8 Z" fill="#d8d8d8"/></svg>
<div style="left:842px;top:51px;width:178.8px;height:19.8px;background:#424242;"></div>
<div style="left:881.2px;top:51px;width:0.8px;height:19.8px;background:#3a3a3a;"></div>
<span class="t" style="left:847.7px;top:54px;font-size:9.5px;line-height:13px;color:#a4a4a4;transform:translate3d(0,0.4px,0) scaleX(0.5872);">ヒストリー</span>
<div style="left:882px;top:51px;width:41.7px;height:19.8px;background:#535353;"></div>
<span class="t" style="left:888.3px;top:54px;font-size:9.5px;line-height:13px;color:#f2f2f2;font-weight:500;transform:translate3d(0,0.4px,0) scaleX(0.6102);">アクション</span>
<svg style="left:1010.2px;top:58.199999999999996px;" width="7.4" height="5.4" viewBox="0 0 7.4 5.4"><path d="M0 0.65 H7.4 M0 2.7 H7.4 M0 4.75 H7.4" stroke="#8c8c8c" stroke-width="1.3"/></svg>
<div style="left:842px;top:70.8px;width:178.8px;height:181.2px;background:#535353;"></div>
<div id="actions" style="left:842px;top:70.8px;width:178.8px;height:181.2px;overflow:hidden">
</div>
<div style="left:857px;top:70.8px;width:0.8px;height:181.2px;background:#494949;"></div>
<div style="left:872.6px;top:70.8px;width:0.8px;height:181.2px;background:#4d4d4d;"></div>
<div style="left:896.4px;top:79.1px;width:114.2px;height:1.0px;background:#484848;"></div>
<div style="left:842px;top:72.9px;width:170px;height:6.7px;overflow:hidden;background:transparent">
<svg style="left:4.4px;top:-3.47px" width="7.6" height="6.4" viewBox="0 0 7.6 6.4"><path d="M0.6 3.4 L2.8 5.6 L7 0.8" fill="none" stroke="#ececec" stroke-width="1.5"/></svg>
<div style="left:19.2px;top:-4.87px;width:8.2px;height:8.2px;border:1px solid #d6d6d6"></div>
<svg style="left:46.6px;top:-3.67px" width="3.8" height="6.4" viewBox="0 0 3.8 6.4"><path d="M0.4 0.4 L3.2 3.2 L0.4 6" fill="none" stroke="#b5b5b5" stroke-width="0.9"/></svg>
<span class="t" style="left:57.8px;top:-6.77px;font-size:9.5px;line-height:13px;color:#d8d8d8;transform:scaleX(0.72)">セピアトーン (選択範囲)</span>
</div>
<div style="left:896.4px;top:93.42999999999999px;width:114.2px;height:1.0px;background:#484848;"></div>
<svg style="left:846.8px;top:83.56499999999998px;" width="7.6" height="6.4" viewBox="0 0 7.6 6.4"><path d="M0.6 3.4 L2.8 5.6 L7 0.8" fill="none" stroke="#ececec" stroke-width="1.5"/></svg>
<svg style="left:861px;top:82.56499999999998px;" width="8.2" height="8.2" viewBox="0 0 8.2 8.2"><rect x="0.5" y="0.5" width="7.2" height="7.2" fill="none" stroke="#d6d6d6" stroke-width="1"/><path d="M0.5 2.3 H7.7" stroke="#d6d6d6" stroke-width="1"/><path d="M2.4 4.9 H5.8" stroke="#d6d6d6" stroke-width="1"/></svg>
<svg style="left:888.6px;top:82.96499999999999px;" width="3.8" height="7.6" viewBox="0 0 3.8 7.6"><path d="M0.4 0.4 L3.3 3.8 L0.4 7.2" fill="none" stroke="#b2b2b2" stroke-width="1"/></svg>
<span class="t" style="left:899.5px;top:80px;font-size:9.5px;line-height:13px;color:#e6e6e6;transform:translate3d(0,0.26px,0) scaleX(0.7652);">フレームチャンネル<i> (50 pixel)</i></span>
<div style="left:896.4px;top:107.75999999999999px;width:114.2px;height:1.0px;background:#484848;"></div>
<svg style="left:846.8px;top:97.895px;" width="7.6" height="6.4" viewBox="0 0 7.6 6.4"><path d="M0.6 3.4 L2.8 5.6 L7 0.8" fill="none" stroke="#ececec" stroke-width="1.5"/></svg>
<div style="left:861px;top:96.89px;width:8.2px;height:8.2px;background:#4d4d4d;border-right:1px solid #5e5e5e;border-bottom:1px solid #5e5e5e"></div>
<svg style="left:888.6px;top:97.295px;" width="3.8" height="7.6" viewBox="0 0 3.8 7.6"><path d="M0.4 0.4 L3.3 3.8 L0.4 7.2" fill="none" stroke="#b2b2b2" stroke-width="1"/></svg>
<span class="t" style="left:899.5px;top:94px;font-size:9.5px;line-height:13px;color:#e6e6e6;transform:translate3d(0,0.59px,0) scaleX(0.8902);">木製<i> (50 pixel)</i></span>
<div style="left:896.4px;top:122.08999999999999px;width:114.2px;height:1.0px;background:#484848;"></div>
<svg style="left:846.8px;top:112.22499999999998px;" width="7.6" height="6.4" viewBox="0 0 7.6 6.4"><path d="M0.6 3.4 L2.8 5.6 L7 0.8" fill="none" stroke="#ececec" stroke-width="1.5"/></svg>
<div style="left:861px;top:111.22px;width:8.2px;height:8.2px;background:#4d4d4d;border-right:1px solid #5e5e5e;border-bottom:1px solid #5e5e5e"></div>
<svg style="left:888.6px;top:111.62499999999999px;" width="3.8" height="7.6" viewBox="0 0 3.8 7.6"><path d="M0.4 0.4 L3.3 3.8 L0.4 7.2" fill="none" stroke="#b2b2b2" stroke-width="1"/></svg>
<span class="t" style="left:899.5px;top:108px;font-size:9.5px;line-height:13px;color:#e6e6e6;transform:translate3d(0,0.92px,0) scaleX(0.7573);">キャストシャドウ<i> (</i>文字<i>)</i></span>
<div style="left:896.4px;top:136.42000000000002px;width:114.2px;height:1.0px;background:#484848;"></div>
<svg style="left:846.8px;top:126.55499999999999px;" width="7.6" height="6.4" viewBox="0 0 7.6 6.4"><path d="M0.6 3.4 L2.8 5.6 L7 0.8" fill="none" stroke="#ececec" stroke-width="1.5"/></svg>
<div style="left:861px;top:125.55px;width:8.2px;height:8.2px;background:#4d4d4d;border-right:1px solid #5e5e5e;border-bottom:1px solid #5e5e5e"></div>
<svg style="left:888.6px;top:125.955px;" width="3.8" height="7.6" viewBox="0 0 3.8 7.6"><path d="M0.4 0.4 L3.3 3.8 L0.4 7.2" fill="none" stroke="#b2b2b2" stroke-width="1"/></svg>
<span class="t" style="left:899.5px;top:123px;font-size:9.5px;line-height:13px;color:#e6e6e6;transform:translate3d(0,0.25px,0) scaleX(0.9504);">水面<i> (</i>文字<i>)</i></span>
<div style="left:896.4px;top:150.75px;width:114.2px;height:1.0px;background:#484848;"></div>
<svg style="left:846.8px;top:140.885px;" width="7.6" height="6.4" viewBox="0 0 7.6 6.4"><path d="M0.6 3.4 L2.8 5.6 L7 0.8" fill="none" stroke="#ececec" stroke-width="1.5"/></svg>
<svg style="left:861px;top:139.885px;" width="8.2" height="8.2" viewBox="0 0 8.2 8.2"><rect x="0.5" y="0.5" width="7.2" height="7.2" fill="none" stroke="#d6d6d6" stroke-width="1"/><path d="M0.5 2.3 H7.7" stroke="#d6d6d6" stroke-width="1"/><path d="M2.4 4.9 H5.8" stroke="#d6d6d6" stroke-width="1"/></svg>
<svg style="left:888.6px;top:140.28499999999997px;" width="3.8" height="7.6" viewBox="0 0 3.8 7.6"><path d="M0.4 0.4 L3.3 3.8 L0.4 7.2" fill="none" stroke="#b2b2b2" stroke-width="1"/></svg>
<span class="t" style="left:899.5px;top:137px;font-size:9.5px;line-height:13px;color:#e6e6e6;transform:translate3d(0,0.58px,0) scaleX(0.7339);">カスタム<i> RGB </i>からグレースケ...</span>
<div style="left:896.4px;top:165.08px;width:114.2px;height:1.0px;background:#484848;"></div>
<svg style="left:846.8px;top:155.21500000000003px;" width="7.6" height="6.4" viewBox="0 0 7.6 6.4"><path d="M0.6 3.4 L2.8 5.6 L7 0.8" fill="none" stroke="#ececec" stroke-width="1.5"/></svg>
<div style="left:861px;top:154.22px;width:8.2px;height:8.2px;background:#4d4d4d;border-right:1px solid #5e5e5e;border-bottom:1px solid #5e5e5e"></div>
<svg style="left:888.6px;top:154.615px;" width="3.8" height="7.6" viewBox="0 0 3.8 7.6"><path d="M0.4 0.4 L3.3 3.8 L0.4 7.2" fill="none" stroke="#b2b2b2" stroke-width="1"/></svg>
<span class="t" style="left:899.5px;top:151px;font-size:9.5px;line-height:13px;color:#e6e6e6;transform:translate3d(0,0.92px,0) scaleX(0.8181);">溶けた鉛</span>
<div style="left:896.4px;top:179.41px;width:114.2px;height:1.0px;background:#484848;"></div>
<svg style="left:846.8px;top:169.54500000000002px;" width="7.6" height="6.4" viewBox="0 0 7.6 6.4"><path d="M0.6 3.4 L2.8 5.6 L7 0.8" fill="none" stroke="#ececec" stroke-width="1.5"/></svg>
<div style="left:861px;top:168.55px;width:8.2px;height:8.2px;background:#4d4d4d;border-right:1px solid #5e5e5e;border-bottom:1px solid #5e5e5e"></div>
<svg style="left:888.6px;top:168.945px;" width="3.8" height="7.6" viewBox="0 0 3.8 7.6"><path d="M0.4 0.4 L3.3 3.8 L0.4 7.2" fill="none" stroke="#b2b2b2" stroke-width="1"/></svg>
<span class="t" style="left:899.5px;top:166px;font-size:9.5px;line-height:13px;color:#e6e6e6;transform:translate3d(0,0.25px,0) scaleX(0.7533);">セピアトーン<i> (</i>レイヤー<i>)</i></span>
<div style="left:896.4px;top:193.74px;width:114.2px;height:1.0px;background:#484848;"></div>
<svg style="left:846.8px;top:183.875px;" width="7.6" height="6.4" viewBox="0 0 7.6 6.4"><path d="M0.6 3.4 L2.8 5.6 L7 0.8" fill="none" stroke="#ececec" stroke-width="1.5"/></svg>
<div style="left:861px;top:182.88px;width:8.2px;height:8.2px;background:#4d4d4d;border-right:1px solid #5e5e5e;border-bottom:1px solid #5e5e5e"></div>
<svg style="left:888.6px;top:183.27499999999998px;" width="3.8" height="7.6" viewBox="0 0 3.8 7.6"><path d="M0.4 0.4 L3.3 3.8 L0.4 7.2" fill="none" stroke="#b2b2b2" stroke-width="1"/></svg>
<span class="t" style="left:899.5px;top:180px;font-size:9.5px;line-height:13px;color:#e6e6e6;transform:translate3d(0,0.57px,0) scaleX(0.6443);">クワドラントカラー</span>
<div style="left:896.4px;top:208.07000000000002px;width:114.2px;height:1.0px;background:#484848;"></div>
<svg style="left:846.8px;top:198.20500000000004px;" width="7.6" height="6.4" viewBox="0 0 7.6 6.4"><path d="M0.6 3.4 L2.8 5.6 L7 0.8" fill="none" stroke="#ececec" stroke-width="1.5"/></svg>
<svg style="left:861px;top:197.20500000000004px;" width="8.2" height="8.2" viewBox="0 0 8.2 8.2"><rect x="0.5" y="0.5" width="7.2" height="7.2" fill="none" stroke="#d6d6d6" stroke-width="1"/><path d="M0.5 2.3 H7.7" stroke="#d6d6d6" stroke-width="1"/></svg>
<svg style="left:888.6px;top:197.60500000000002px;" width="3.8" height="7.6" viewBox="0 0 3.8 7.6"><path d="M0.4 0.4 L3.3 3.8 L0.4 7.2" fill="none" stroke="#b2b2b2" stroke-width="1"/></svg>
<span class="t" style="left:899.8px;top:194px;font-size:9.5px;line-height:13px;color:#e6e6e6;transform:translate3d(0,0.91px,0) scaleX(0.8088);"><i>Photoshop PDF </i>形式で保存</span>
<div style="left:896.4px;top:222.4px;width:114.2px;height:1.0px;background:#484848;"></div>
<svg style="left:846.8px;top:212.53500000000003px;" width="7.6" height="6.4" viewBox="0 0 7.6 6.4"><path d="M0.6 3.4 L2.8 5.6 L7 0.8" fill="none" stroke="#ececec" stroke-width="1.5"/></svg>
<div style="left:861px;top:211.54px;width:8.2px;height:8.2px;background:#4d4d4d;border-right:1px solid #5e5e5e;border-bottom:1px solid #5e5e5e"></div>
<svg style="left:888.6px;top:211.935px;" width="3.8" height="7.6" viewBox="0 0 3.8 7.6"><path d="M0.4 0.4 L3.3 3.8 L0.4 7.2" fill="none" stroke="#b2b2b2" stroke-width="1"/></svg>
<span class="t" style="left:899.5px;top:209px;font-size:9.5px;line-height:13px;color:#e6e6e6;transform:translate3d(0,0.24px,0) scaleX(0.6550);">グラデーションマップ</span>
<div style="left:896.4px;top:236.73000000000002px;width:114.2px;height:1.0px;background:#484848;"></div>
<svg style="left:846.8px;top:226.865px;" width="7.6" height="6.4" viewBox="0 0 7.6 6.4"><path d="M0.6 3.4 L2.8 5.6 L7 0.8" fill="none" stroke="#ececec" stroke-width="1.5"/></svg>
<svg style="left:861px;top:225.865px;" width="8.2" height="8.2" viewBox="0 0 8.2 8.2"><rect x="0.5" y="0.5" width="7.2" height="7.2" fill="none" stroke="#d6d6d6" stroke-width="1"/><path d="M0.5 2.3 H7.7" stroke="#d6d6d6" stroke-width="1"/><path d="M2.4 4.9 H5.8" stroke="#d6d6d6" stroke-width="1"/></svg>
<svg style="left:888.6px;top:226.265px;" width="3.8" height="7.6" viewBox="0 0 3.8 7.6"><path d="M0.4 0.4 L3.3 3.8 L0.4 7.2" fill="none" stroke="#b2b2b2" stroke-width="1"/></svg>
<span class="t" style="left:899.5px;top:223px;font-size:9.5px;line-height:13px;color:#e6e6e6;transform:translate3d(0,0.56px,0) scaleX(0.7343);">混合 ブラシクローニングペイ...</span>
<div style="left:896.4px;top:237.82999999999998px;width:113.0px;height:13.73px;background:#6b6b6b;"></div>
<div style="left:861px;top:240.19px;width:8.2px;height:8.2px;background:#4d4d4d;border-right:1px solid #5e5e5e;border-bottom:1px solid #5e5e5e"></div>
<svg style="left:887.4px;top:242.59499999999997px;" width="6.4" height="3.8" viewBox="0 0 6.4 3.8"><path d="M0.4 0.4 L3.2 3.2 L6 0.4" fill="none" stroke="#b5b5b5" stroke-width="0.9"/></svg>
<span class="t" style="left:899.5px;top:237px;font-size:9.5px;line-height:13px;color:#f0f0f0;transform:translate3d(0,0.89px,0) scaleX(0.8151);">横幅<i> 960px</i></span>
<div style="left:1010.8px;top:70.8px;width:10.0px;height:181.2px;background:#4d4d4d;"></div>
<div style="left:1011.6px;top:101.4px;width:8.4px;height:135.6px;background:#6a6a6a;"></div>
<svg style="left:1013.2px;top:79.6px;" width="5" height="3" viewBox="0 0 5 3"><path d="M0.3 2.7 L2.5 0.5 L4.7 2.7" fill="none" stroke="#8c8c8c" stroke-width="0.9"/></svg>
<svg style="left:1013.2px;top:243px;" width="5" height="3" viewBox="0 0 5 3"><path d="M0.3 0.3 L2.5 2.5 L4.7 0.3" fill="none" stroke="#8c8c8c" stroke-width="0.9"/></svg>
<div style="left:842px;top:252px;width:178.8px;height:16.1px;background:#535353;"></div>
<div style="left:842px;top:251.6px;width:178.8px;height:0.8px;background:#424242;"></div>
<div style="left:901.8px;top:252.4px;width:19.2px;height:15.7px;background:#3d3d3d;"></div>
<div style="left:888.6px;top:258.2px;width:5.0px;height:5.0px;background:#e8e8e8;"></div>
<div style="left:908.6px;top:256.9px;width:7px;height:7px;border-radius:50%;background:#f02c2c"></div>
<svg style="left:930.6px;top:257.4px;" width="6.6" height="6.8" viewBox="0 0 6.6 6.8"><path d="M0 0 L6.6 3.4 L0 6.8 Z" fill="#a9a9a9"/></svg>
<svg style="left:949px;top:256.8px;" width="9.2" height="7.6" viewBox="0 0 9.2 7.6"><path d="M0 0.8 a0.8 0.8 0 0 1 0.8 -0.8 H3.4 L4.4 1.2 H8.4 a0.8 0.8 0 0 1 0.8 0.8 V7.6 H0 Z" fill="#e4e4e4"/></svg>
<svg style="left:972.8px;top:256.6px;" width="8.2" height="8.2" viewBox="0 0 8.2 8.2"><rect x="0.5" y="0.5" width="7.2" height="7.2" fill="none" stroke="#e4e4e4" stroke-width="1"/><path d="M4.1 2.1 V6.1 M2.1 4.1 H6.1" stroke="#e4e4e4" stroke-width="1.1"/></svg>
<svg style="left:993.3px;top:256.6px;" width="7.6" height="9" viewBox="0 0 7.6 9"><path d="M0 1.7 H7.6 M2.6 1.5 V0.5 H5 V1.5" fill="none" stroke="#8f8f8f" stroke-width="0.9"/><path d="M1 2.8 L1.4 8.5 H6.2 L6.6 2.8 M2.8 3.4 V7.6 M3.8 3.4 V7.6 M4.8 3.4 V7.6" fill="none" stroke="#8f8f8f" stroke-width="0.8"/></svg>
<div style="left:842px;top:270px;width:178.8px;height:19.8px;background:#424242;"></div>
<div style="left:842px;top:270px;width:46px;height:19.8px;background:#535353;"></div>
<span class="t" style="left:848.2px;top:273px;font-size:9.5px;line-height:13px;color:#f2f2f2;font-weight:500;transform:translate3d(0,0.5px,0) scaleX(0.5928);">ナビゲーター</span>
<div style="left:933.8000000000001px;top:270px;width:0.8px;height:19.8px;background:#3a3a3a;"></div>
<span class="t" style="left:893.7px;top:273px;font-size:9.5px;line-height:13px;color:#a4a4a4;transform:translate3d(0,0.5px,0) scaleX(0.6171);">ヒストグラム</span>
<svg style="left:1010.2px;top:277.3px;" width="7.4" height="5.4" viewBox="0 0 7.4 5.4"><path d="M0 0.65 H7.4 M0 2.7 H7.4 M0 4.75 H7.4" stroke="#8c8c8c" stroke-width="1.3"/></svg>
<div style="left:842px;top:289.8px;width:178.8px;height:179.2px;background:#535353;"></div>
<div style="left:871.4px;top:294.7px;width:118.9px;height:171.1px;background:#ffffff;border:1.5px solid #e83a3a"></div>
<div style="left:878.1px;top:309.0px;width:108.1px;height:3.8px;background:linear-gradient(90deg,rgb(242,242,242) 0.0%,rgb(216,216,216) 2.8%,rgb(236,236,236) 5.6%,rgb(236,236,236) 8.3%,rgb(242,242,242) 11.1%,rgb(216,216,216) 13.9%,rgb(224,224,224) 16.7%,rgb(236,236,236) 19.4%,rgb(236,236,236) 22.2%,rgb(230,230,230) 25.0%,rgb(248,248,248) 27.8%,rgb(224,224,224) 30.6%,rgb(216,216,216) 33.3%,rgb(242,242,242) 36.1%,rgb(236,236,236) 38.9%,rgb(230,230,230) 41.7%,rgb(216,216,216) 44.4%,rgb(224,224,224) 47.2%,rgb(248,248,248) 50.0%,rgb(230,230,230) 52.8%,rgb(216,216,216) 55.6%,rgb(236,236,236) 58.3%,rgb(224,224,224) 61.1%,rgb(242,242,242) 63.9%,rgb(230,230,230) 66.7%,rgb(236,236,236) 69.4%,rgb(236,236,236) 72.2%,rgb(230,230,230) 75.0%,rgb(248,248,248) 77.8%,rgb(230,230,230) 80.6%,rgb(236,236,236) 83.3%,rgb(224,224,224) 86.1%,rgb(248,248,248) 88.9%,rgb(230,230,230) 91.7%,rgb(248,248,248) 94.4%,rgb(230,230,230) 97.2%,rgb(224,224,224) 100.0%);filter:blur(0.9px)"></div>
<div style="left:875.4px;top:315.1px;width:110.8px;height:3.8px;background:linear-gradient(90deg,rgb(236,236,236) 0.0%,rgb(242,242,242) 2.8%,rgb(236,236,236) 5.6%,rgb(236,236,236) 8.3%,rgb(242,242,242) 11.1%,rgb(242,242,242) 13.9%,rgb(224,224,224) 16.7%,rgb(224,224,224) 19.4%,rgb(242,242,242) 22.2%,rgb(236,236,236) 25.0%,rgb(248,248,248) 27.8%,rgb(242,242,242) 30.6%,rgb(224,224,224) 33.3%,rgb(216,216,216) 36.1%,rgb(236,236,236) 38.9%,rgb(230,230,230) 41.7%,rgb(224,224,224) 44.4%,rgb(216,216,216) 47.2%,rgb(242,242,242) 50.0%,rgb(248,248,248) 52.8%,rgb(248,248,248) 55.6%,rgb(216,216,216) 58.3%,rgb(242,242,242) 61.1%,rgb(236,236,236) 63.9%,rgb(236,236,236) 66.7%,rgb(248,248,248) 69.4%,rgb(248,248,248) 72.2%,rgb(242,242,242) 75.0%,rgb(248,248,248) 77.8%,rgb(224,224,224) 80.6%,rgb(242,242,242) 83.3%,rgb(216,216,216) 86.1%,rgb(242,242,242) 88.9%,rgb(216,216,216) 91.7%,rgb(216,216,216) 94.4%,rgb(216,216,216) 97.2%,rgb(224,224,224) 100.0%);filter:blur(0.9px)"></div>
<div style="left:875.4px;top:321.9px;width:110.1px;height:3.8px;background:linear-gradient(90deg,rgb(236,236,236) 0.0%,rgb(230,230,230) 2.8%,rgb(248,248,248) 5.6%,rgb(242,242,242) 8.3%,rgb(248,248,248) 11.1%,rgb(230,230,230) 13.9%,rgb(224,224,224) 16.7%,rgb(236,236,236) 19.4%,rgb(216,216,216) 22.2%,rgb(230,230,230) 25.0%,rgb(236,236,236) 27.8%,rgb(230,230,230) 30.6%,rgb(248,248,248) 33.3%,rgb(236,236,236) 36.1%,rgb(248,248,248) 38.9%,rgb(242,242,242) 41.7%,rgb(224,224,224) 44.4%,rgb(242,242,242) 47.2%,rgb(216,216,216) 50.0%,rgb(248,248,248) 52.8%,rgb(242,242,242) 55.6%,rgb(224,224,224) 58.3%,rgb(236,236,236) 61.1%,rgb(230,230,230) 63.9%,rgb(224,224,224) 66.7%,rgb(230,230,230) 69.4%,rgb(224,224,224) 72.2%,rgb(216,216,216) 75.0%,rgb(242,242,242) 77.8%,rgb(224,224,224) 80.6%,rgb(216,216,216) 83.3%,rgb(242,242,242) 86.1%,rgb(248,248,248) 88.9%,rgb(230,230,230) 91.7%,rgb(248,248,248) 94.4%,rgb(236,236,236) 97.2%,rgb(216,216,216) 100.0%);filter:blur(0.9px)"></div>
<div style="left:875.4px;top:328.0px;width:24.6px;height:3.8px;background:linear-gradient(90deg,rgb(230,230,230) 0.0%,rgb(230,230,230) 12.5%,rgb(248,248,248) 25.0%,rgb(248,248,248) 37.5%,rgb(224,224,224) 50.0%,rgb(248,248,248) 62.5%,rgb(224,224,224) 75.0%,rgb(248,248,248) 87.5%,rgb(224,224,224) 100.0%);filter:blur(0.9px)"></div>
<div style="left:878.1px;top:339.5px;width:108.1px;height:3.8px;background:linear-gradient(90deg,rgb(216,216,216) 0.0%,rgb(242,242,242) 2.8%,rgb(248,248,248) 5.6%,rgb(248,248,248) 8.3%,rgb(242,242,242) 11.1%,rgb(224,224,224) 13.9%,rgb(230,230,230) 16.7%,rgb(248,248,248) 19.4%,rgb(230,230,230) 22.2%,rgb(230,230,230) 25.0%,rgb(248,248,248) 27.8%,rgb(216,216,216) 30.6%,rgb(248,248,248) 33.3%,rgb(236,236,236) 36.1%,rgb(230,230,230) 38.9%,rgb(236,236,236) 41.7%,rgb(248,248,248) 44.4%,rgb(236,236,236) 47.2%,rgb(236,236,236) 50.0%,rgb(216,216,216) 52.8%,rgb(230,230,230) 55.6%,rgb(224,224,224) 58.3%,rgb(230,230,230) 61.1%,rgb(230,230,230) 63.9%,rgb(230,230,230) 66.7%,rgb(230,230,230) 69.4%,rgb(248,248,248) 72.2%,rgb(248,248,248) 75.0%,rgb(242,242,242) 77.8%,rgb(224,224,224) 80.6%,rgb(224,224,224) 83.3%,rgb(242,242,242) 86.1%,rgb(248,248,248) 88.9%,rgb(248,248,248) 91.7%,rgb(230,230,230) 94.4%,rgb(224,224,224) 97.2%,rgb(216,216,216) 100.0%);filter:blur(0.9px)"></div>
<div style="left:875.4px;top:344.9px;width:110.8px;height:3.8px;background:linear-gradient(90deg,rgb(224,224,224) 0.0%,rgb(216,216,216) 2.8%,rgb(242,242,242) 5.6%,rgb(248,248,248) 8.3%,rgb(216,216,216) 11.1%,rgb(224,224,224) 13.9%,rgb(224,224,224) 16.7%,rgb(216,216,216) 19.4%,rgb(216,216,216) 22.2%,rgb(248,248,248) 25.0%,rgb(224,224,224) 27.8%,rgb(248,248,248) 30.6%,rgb(230,230,230) 33.3%,rgb(224,224,224) 36.1%,rgb(216,216,216) 38.9%,rgb(230,230,230) 41.7%,rgb(236,236,236) 44.4%,rgb(248,248,248) 47.2%,rgb(230,230,230) 50.0%,rgb(230,230,230) 52.8%,rgb(236,236,236) 55.6%,rgb(230,230,230) 58.3%,rgb(230,230,230) 61.1%,rgb(224,224,224) 63.9%,rgb(224,224,224) 66.7%,rgb(230,230,230) 69.4%,rgb(230,230,230) 72.2%,rgb(224,224,224) 75.0%,rgb(230,230,230) 77.8%,rgb(248,248,248) 80.6%,rgb(242,242,242) 83.3%,rgb(236,236,236) 86.1%,rgb(224,224,224) 88.9%,rgb(242,242,242) 91.7%,rgb(236,236,236) 94.4%,rgb(236,236,236) 97.2%,rgb(236,236,236) 100.0%);filter:blur(0.9px)"></div>
<div style="left:878.1px;top:355.7px;width:104.7px;height:3.8px;background:linear-gradient(90deg,rgb(230,230,230) 0.0%,rgb(236,236,236) 2.9%,rgb(236,236,236) 5.9%,rgb(230,230,230) 8.8%,rgb(236,236,236) 11.8%,rgb(224,224,224) 14.7%,rgb(236,236,236) 17.6%,rgb(216,216,216) 20.6%,rgb(236,236,236) 23.5%,rgb(248,248,248) 26.5%,rgb(248,248,248) 29.4%,rgb(230,230,230) 32.4%,rgb(224,224,224) 35.3%,rgb(248,248,248) 38.2%,rgb(224,224,224) 41.2%,rgb(216,216,216) 44.1%,rgb(230,230,230) 47.1%,rgb(230,230,230) 50.0%,rgb(230,230,230) 52.9%,rgb(248,248,248) 55.9%,rgb(224,224,224) 58.8%,rgb(248,248,248) 61.8%,rgb(242,242,242) 64.7%,rgb(230,230,230) 67.6%,rgb(216,216,216) 70.6%,rgb(224,224,224) 73.5%,rgb(242,242,242) 76.5%,rgb(230,230,230) 79.4%,rgb(216,216,216) 82.4%,rgb(224,224,224) 85.3%,rgb(242,242,242) 88.2%,rgb(248,248,248) 91.2%,rgb(248,248,248) 94.1%,rgb(216,216,216) 97.1%,rgb(236,236,236) 100.0%);filter:blur(0.9px)"></div>
<div style="left:875.4px;top:362.4px;width:110.1px;height:3.8px;background:linear-gradient(90deg,rgb(242,242,242) 0.0%,rgb(236,236,236) 2.8%,rgb(230,230,230) 5.6%,rgb(230,230,230) 8.3%,rgb(230,230,230) 11.1%,rgb(224,224,224) 13.9%,rgb(248,248,248) 16.7%,rgb(248,248,248) 19.4%,rgb(242,242,242) 22.2%,rgb(248,248,248) 25.0%,rgb(230,230,230) 27.8%,rgb(216,216,216) 30.6%,rgb(216,216,216) 33.3%,rgb(224,224,224) 36.1%,rgb(236,236,236) 38.9%,rgb(248,248,248) 41.7%,rgb(236,236,236) 44.4%,rgb(230,230,230) 47.2%,rgb(242,242,242) 50.0%,rgb(230,230,230) 52.8%,rgb(248,248,248) 55.6%,rgb(248,248,248) 58.3%,rgb(248,248,248) 61.1%,rgb(236,236,236) 63.9%,rgb(224,224,224) 66.7%,rgb(242,242,242) 69.4%,rgb(216,216,216) 72.2%,rgb(224,224,224) 75.0%,rgb(224,224,224) 77.8%,rgb(224,224,224) 80.6%,rgb(248,248,248) 83.3%,rgb(242,242,242) 86.1%,rgb(242,242,242) 88.9%,rgb(248,248,248) 91.7%,rgb(224,224,224) 94.4%,rgb(230,230,230) 97.2%,rgb(242,242,242) 100.0%);filter:blur(0.9px)"></div>
<div style="left:875.4px;top:369.2px;width:110.8px;height:3.8px;background:linear-gradient(90deg,rgb(224,224,224) 0.0%,rgb(216,216,216) 2.8%,rgb(248,248,248) 5.6%,rgb(236,236,236) 8.3%,rgb(230,230,230) 11.1%,rgb(224,224,224) 13.9%,rgb(224,224,224) 16.7%,rgb(236,236,236) 19.4%,rgb(248,248,248) 22.2%,rgb(236,236,236) 25.0%,rgb(224,224,224) 27.8%,rgb(236,236,236) 30.6%,rgb(230,230,230) 33.3%,rgb(236,236,236) 36.1%,rgb(230,230,230) 38.9%,rgb(224,224,224) 41.7%,rgb(230,230,230) 44.4%,rgb(248,248,248) 47.2%,rgb(216,216,216) 50.0%,rgb(230,230,230) 52.8%,rgb(242,242,242) 55.6%,rgb(248,248,248) 58.3%,rgb(224,224,224) 61.1%,rgb(224,224,224) 63.9%,rgb(224,224,224) 66.7%,rgb(224,224,224) 69.4%,rgb(224,224,224) 72.2%,rgb(248,248,248) 75.0%,rgb(230,230,230) 77.8%,rgb(242,242,242) 80.6%,rgb(242,242,242) 83.3%,rgb(224,224,224) 86.1%,rgb(248,248,248) 88.9%,rgb(236,236,236) 91.7%,rgb(224,224,224) 94.4%,rgb(248,248,248) 97.2%,rgb(230,230,230) 100.0%);filter:blur(0.9px)"></div>
<div style="left:875.4px;top:375.3px;width:80.4px;height:3.8px;background:linear-gradient(90deg,rgb(248,248,248) 0.0%,rgb(216,216,216) 3.8%,rgb(242,242,242) 7.7%,rgb(216,216,216) 11.5%,rgb(242,242,242) 15.4%,rgb(224,224,224) 19.2%,rgb(236,236,236) 23.1%,rgb(230,230,230) 26.9%,rgb(242,242,242) 30.8%,rgb(230,230,230) 34.6%,rgb(242,242,242) 38.5%,rgb(224,224,224) 42.3%,rgb(242,242,242) 46.2%,rgb(230,230,230) 50.0%,rgb(216,216,216) 53.8%,rgb(230,230,230) 57.7%,rgb(236,236,236) 61.5%,rgb(230,230,230) 65.4%,rgb(230,230,230) 69.2%,rgb(216,216,216) 73.1%,rgb(230,230,230) 76.9%,rgb(230,230,230) 80.8%,rgb(216,216,216) 84.6%,rgb(242,242,242) 88.5%,rgb(242,242,242) 92.3%,rgb(224,224,224) 96.2%,rgb(216,216,216) 100.0%);filter:blur(0.9px)"></div>
<div style="left:878.1px;top:387.1px;width:107.4px;height:3.8px;background:linear-gradient(90deg,rgb(248,248,248) 0.0%,rgb(248,248,248) 2.9%,rgb(224,224,224) 5.7%,rgb(230,230,230) 8.6%,rgb(248,248,248) 11.4%,rgb(248,248,248) 14.3%,rgb(216,216,216) 17.1%,rgb(230,230,230) 20.0%,rgb(242,242,242) 22.9%,rgb(224,224,224) 25.7%,rgb(216,216,216) 28.6%,rgb(236,236,236) 31.4%,rgb(236,236,236) 34.3%,rgb(216,216,216) 37.1%,rgb(216,216,216) 40.0%,rgb(224,224,224) 42.9%,rgb(230,230,230) 45.7%,rgb(236,236,236) 48.6%,rgb(242,242,242) 51.4%,rgb(236,236,236) 54.3%,rgb(236,236,236) 57.1%,rgb(224,224,224) 60.0%,rgb(224,224,224) 62.9%,rgb(230,230,230) 65.7%,rgb(248,248,248) 68.6%,rgb(248,248,248) 71.4%,rgb(230,230,230) 74.3%,rgb(230,230,230) 77.1%,rgb(236,236,236) 80.0%,rgb(216,216,216) 82.9%,rgb(248,248,248) 85.7%,rgb(242,242,242) 88.6%,rgb(236,236,236) 91.4%,rgb(236,236,236) 94.3%,rgb(216,216,216) 97.1%,rgb(224,224,224) 100.0%);filter:blur(0.9px)"></div>
<div style="left:875.4px;top:393.2px;width:65.2px;height:3.8px;background:linear-gradient(90deg,rgb(224,224,224) 0.0%,rgb(236,236,236) 4.8%,rgb(248,248,248) 9.5%,rgb(236,236,236) 14.3%,rgb(248,248,248) 19.0%,rgb(230,230,230) 23.8%,rgb(236,236,236) 28.6%,rgb(224,224,224) 33.3%,rgb(236,236,236) 38.1%,rgb(242,242,242) 42.9%,rgb(224,224,224) 47.6%,rgb(242,242,242) 52.4%,rgb(242,242,242) 57.1%,rgb(224,224,224) 61.9%,rgb(216,216,216) 66.7%,rgb(216,216,216) 71.4%,rgb(230,230,230) 76.2%,rgb(242,242,242) 81.0%,rgb(236,236,236) 85.7%,rgb(216,216,216) 90.5%,rgb(224,224,224) 95.2%,rgb(224,224,224) 100.0%);filter:blur(0.9px)"></div>
<div style="left:878.1px;top:404.7px;width:104.7px;height:3.8px;background:linear-gradient(90deg,rgb(224,224,224) 0.0%,rgb(224,224,224) 2.9%,rgb(216,216,216) 5.9%,rgb(242,242,242) 8.8%,rgb(236,236,236) 11.8%,rgb(224,224,224) 14.7%,rgb(248,248,248) 17.6%,rgb(216,216,216) 20.6%,rgb(248,248,248) 23.5%,rgb(248,248,248) 26.5%,rgb(230,230,230) 29.4%,rgb(216,216,216) 32.4%,rgb(224,224,224) 35.3%,rgb(230,230,230) 38.2%,rgb(216,216,216) 41.2%,rgb(230,230,230) 44.1%,rgb(242,242,242) 47.1%,rgb(224,224,224) 50.0%,rgb(242,242,242) 52.9%,rgb(248,248,248) 55.9%,rgb(248,248,248) 58.8%,rgb(236,236,236) 61.8%,rgb(248,248,248) 64.7%,rgb(216,216,216) 67.6%,rgb(242,242,242) 70.6%,rgb(216,216,216) 73.5%,rgb(242,242,242) 76.5%,rgb(230,230,230) 79.4%,rgb(230,230,230) 82.4%,rgb(236,236,236) 85.3%,rgb(224,224,224) 88.2%,rgb(224,224,224) 91.2%,rgb(216,216,216) 94.1%,rgb(242,242,242) 97.1%,rgb(242,242,242) 100.0%);filter:blur(0.9px)"></div>
<div style="left:875.4px;top:412.1px;width:110.1px;height:3.8px;background:linear-gradient(90deg,rgb(230,230,230) 0.0%,rgb(216,216,216) 2.8%,rgb(216,216,216) 5.6%,rgb(242,242,242) 8.3%,rgb(230,230,230) 11.1%,rgb(236,236,236) 13.9%,rgb(236,236,236) 16.7%,rgb(242,242,242) 19.4%,rgb(230,230,230) 22.2%,rgb(224,224,224) 25.0%,rgb(248,248,248) 27.8%,rgb(224,224,224) 30.6%,rgb(230,230,230) 33.3%,rgb(236,236,236) 36.1%,rgb(216,216,216) 38.9%,rgb(224,224,224) 41.7%,rgb(242,242,242) 44.4%,rgb(236,236,236) 47.2%,rgb(216,216,216) 50.0%,rgb(216,216,216) 52.8%,rgb(216,216,216) 55.6%,rgb(248,248,248) 58.3%,rgb(236,236,236) 61.1%,rgb(236,236,236) 63.9%,rgb(216,216,216) 66.7%,rgb(242,242,242) 69.4%,rgb(248,248,248) 72.2%,rgb(248,248,248) 75.0%,rgb(236,236,236) 77.8%,rgb(230,230,230) 80.6%,rgb(216,216,216) 83.3%,rgb(224,224,224) 86.1%,rgb(216,216,216) 88.9%,rgb(242,242,242) 91.7%,rgb(230,230,230) 94.4%,rgb(248,248,248) 97.2%,rgb(224,224,224) 100.0%);filter:blur(0.9px)"></div>
<div style="left:875.4px;top:418.2px;width:110.1px;height:3.8px;background:linear-gradient(90deg,rgb(248,248,248) 0.0%,rgb(236,236,236) 2.8%,rgb(242,242,242) 5.6%,rgb(224,224,224) 8.3%,rgb(224,224,224) 11.1%,rgb(224,224,224) 13.9%,rgb(224,224,224) 16.7%,rgb(224,224,224) 19.4%,rgb(248,248,248) 22.2%,rgb(248,248,248) 25.0%,rgb(216,216,216) 27.8%,rgb(248,248,248) 30.6%,rgb(224,224,224) 33.3%,rgb(248,248,248) 36.1%,rgb(230,230,230) 38.9%,rgb(248,248,248) 41.7%,rgb(216,216,216) 44.4%,rgb(236,236,236) 47.2%,rgb(236,236,236) 50.0%,rgb(248,248,248) 52.8%,rgb(248,248,248) 55.6%,rgb(216,216,216) 58.3%,rgb(216,216,216) 61.1%,rgb(242,242,242) 63.9%,rgb(224,224,224) 66.7%,rgb(236,236,236) 69.4%,rgb(248,248,248) 72.2%,rgb(236,236,236) 75.0%,rgb(248,248,248) 77.8%,rgb(230,230,230) 80.6%,rgb(236,236,236) 83.3%,rgb(216,216,216) 86.1%,rgb(248,248,248) 88.9%,rgb(230,230,230) 91.7%,rgb(242,242,242) 94.4%,rgb(224,224,224) 97.2%,rgb(248,248,248) 100.0%);filter:blur(0.9px)"></div>
<div style="left:875.4px;top:423.2px;width:7.7px;height:3.8px;background:linear-gradient(90deg,rgb(236,236,236) 0.0%,rgb(216,216,216) 50.0%,rgb(224,224,224) 100.0%);filter:blur(0.9px)"></div>
<div style="left:878.1px;top:440.5px;width:86.1px;height:3.8px;background:linear-gradient(90deg,rgb(248,248,248) 0.0%,rgb(224,224,224) 3.6%,rgb(248,248,248) 7.1%,rgb(224,224,224) 10.7%,rgb(236,236,236) 14.3%,rgb(242,242,242) 17.9%,rgb(242,242,242) 21.4%,rgb(216,216,216) 25.0%,rgb(224,224,224) 28.6%,rgb(236,236,236) 32.1%,rgb(216,216,216) 35.7%,rgb(248,248,248) 39.3%,rgb(248,248,248) 42.9%,rgb(242,242,242) 46.4%,rgb(242,242,242) 50.0%,rgb(224,224,224) 53.6%,rgb(248,248,248) 57.1%,rgb(236,236,236) 60.7%,rgb(224,224,224) 64.3%,rgb(248,248,248) 67.9%,rgb(236,236,236) 71.4%,rgb(248,248,248) 75.0%,rgb(224,224,224) 78.6%,rgb(248,248,248) 82.1%,rgb(216,216,216) 85.7%,rgb(248,248,248) 89.3%,rgb(224,224,224) 92.9%,rgb(224,224,224) 96.4%,rgb(224,224,224) 100.0%);filter:blur(0.9px)"></div>
<div style="left:842px;top:470.6px;width:178.8px;height:16.8px;background:#535353;"></div>
<div style="left:842px;top:470.6px;width:40.8px;height:16.8px;background:#4a4a4a;"></div>
<span class="t" style="left:844.5px;top:472px;font-size:9.5px;line-height:13px;color:#e0e0e0;transform:translate3d(0,0.37px,0) scaleX(0.8572);">25%</span>
<svg style="left:888.2px;top:476.6px;" width="6.8" height="3.4" viewBox="0 0 6.8 3.4"><path d="M0 3.4 L2 1 L3 1.8 L4.6 0 L6.8 3.4 Z" fill="#e0e0e0"/></svg>
<div style="left:905.2px;top:476.2px;width:78.8px;height:1.4px;background:#7c7c7c;"></div>
<svg style="left:930.7px;top:477.1px;" width="9" height="7.8" viewBox="0 0 9 7.8"><path d="M4.5 0 L8.5 5 Q9.2 7.8 4.5 7.8 Q-0.2 7.8 0.5 5 Z" fill="#f4f4f4"/></svg>
<svg style="left:991px;top:474.6px;" width="12.4" height="5.6" viewBox="0 0 12.4 5.6"><path d="M0 5.6 L3.4 1.6 L5 3 L8 0 L12.4 5.6 Z" fill="#e0e0e0"/></svg>
<div style="left:842px;top:489.8px;width:178.8px;height:20.0px;background:#424242;"></div>
<div style="left:887.4000000000001px;top:489.8px;width:0.8px;height:20.0px;background:#3a3a3a;"></div>
<span class="t" style="left:848.2px;top:493px;font-size:9.5px;line-height:13px;color:#a4a4a4;transform:translate3d(0,0.1px,0) scaleX(0.6933);">ブラシ設定</span>
<div style="left:888.6px;top:489.8px;width:29.9px;height:20.0px;background:#535353;"></div>
<span class="t" style="left:894.5px;top:493px;font-size:9.5px;line-height:13px;color:#f2f2f2;font-weight:500;transform:translate3d(0,0.1px,0) scaleX(0.6181);">ブラシ</span>
<svg style="left:1010.2px;top:496.90000000000003px;" width="7.4" height="5.4" viewBox="0 0 7.4 5.4"><path d="M0 0.65 H7.4 M0 2.7 H7.4 M0 4.75 H7.4" stroke="#8c8c8c" stroke-width="1.3"/></svg>
<div style="left:842px;top:512.7px;width:178.8px;height:20.0px;background:#424242;"></div>
<div style="left:842px;top:512.7px;width:28px;height:20.0px;background:#535353;"></div>
<span class="t" style="left:848.2px;top:515px;font-size:9.5px;line-height:13px;color:#f2f2f2;font-weight:500;transform:translate3d(0,0.9px,0) scaleX(0.8309);">文字</span>
<div style="left:897.2px;top:512.7px;width:0.8px;height:20.0px;background:#3a3a3a;"></div>
<span class="t" style="left:876.1px;top:515px;font-size:9.5px;line-height:13px;color:#a4a4a4;transform:translate3d(0,0.9px,0) scaleX(0.8362);">段落</span>
<svg style="left:1010.2px;top:519.6999999999999px;" width="7.4" height="5.4" viewBox="0 0 7.4 5.4"><path d="M0 0.65 H7.4 M0 2.7 H7.4 M0 4.75 H7.4" stroke="#8c8c8c" stroke-width="1.3"/></svg>
<div style="left:842px;top:535.8px;width:178.8px;height:20.2px;background:#424242;"></div>
<div style="left:893.7px;top:535.8px;width:0.8px;height:20.2px;background:#3a3a3a;"></div>
<span class="t" style="left:848.2px;top:538px;font-size:9.5px;line-height:13px;color:#a4a4a4;transform:translate3d(0,0.9px,0) scaleX(0.6910);">段落スタイル</span>
<div style="left:894.5px;top:535.8px;width:52.5px;height:20.2px;background:#535353;"></div>
<span class="t" style="left:901.6px;top:538px;font-size:9.5px;line-height:13px;color:#f2f2f2;font-weight:500;transform:translate3d(0,0.9px,0) scaleX(0.6910);">文字スタイル</span>
<svg style="left:1010.2px;top:542.6999999999999px;" width="7.4" height="5.4" viewBox="0 0 7.4 5.4"><path d="M0 0.65 H7.4 M0 2.7 H7.4 M0 4.75 H7.4" stroke="#8c8c8c" stroke-width="1.3"/></svg>
</section>
</body></html>
